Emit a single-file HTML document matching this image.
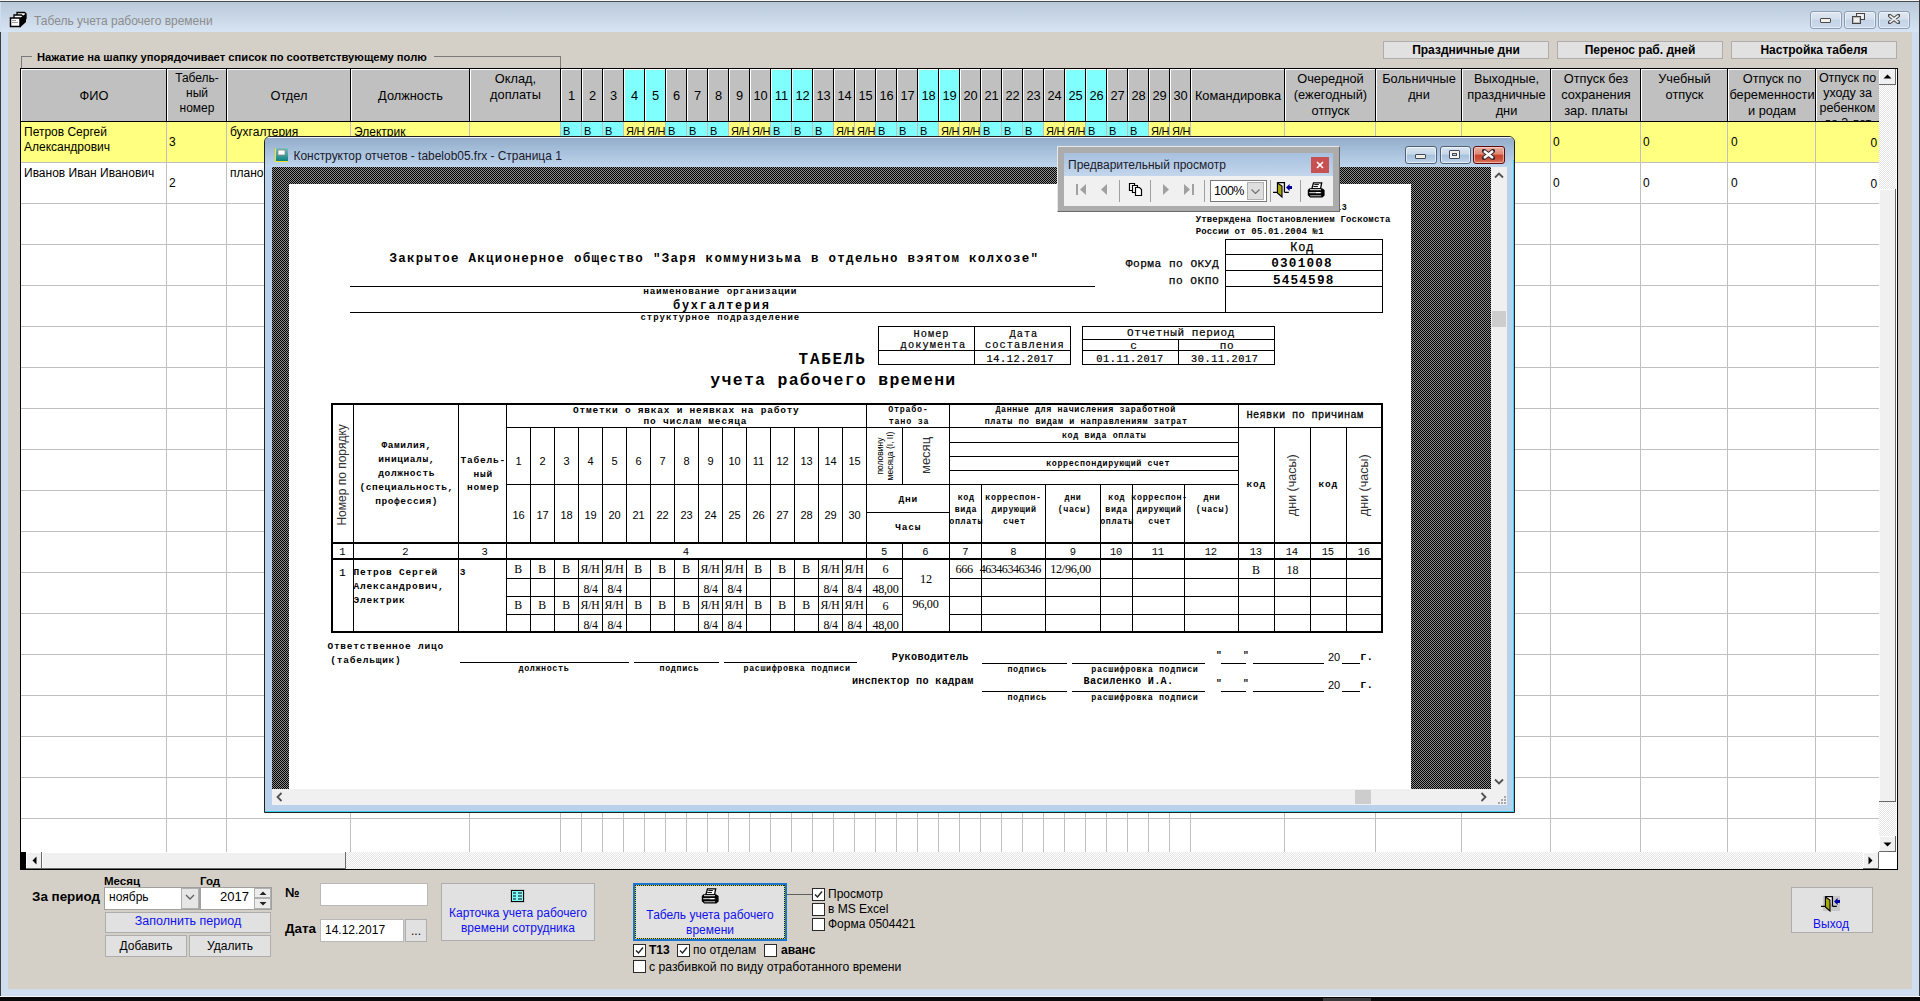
<!DOCTYPE html><html><head><meta charset="utf-8"><style>
html,body{margin:0;padding:0}
body{width:1920px;height:1001px;position:relative;overflow:hidden;background:#d4d0c8;font-family:"Liberation Sans",sans-serif;font-size:12px;color:#000}
div{position:absolute;box-sizing:border-box}
.t{white-space:pre;line-height:14px}
.m{font-family:"Liberation Mono",monospace}
.b{font-weight:bold}
.hatch{background-color:#8a8a8a;background-image:linear-gradient(45deg,#000 25%,transparent 25%,transparent 75%,#000 75%),linear-gradient(45deg,#000 25%,transparent 25%,transparent 75%,#000 75%);background-size:2px 2px;background-position:0 0,1px 1px}
.chk{background:#fff;border:1px solid #333}
.lchk{background-color:#fff;background-image:linear-gradient(45deg,#e4e4e4 25%,transparent 25%,transparent 75%,#e4e4e4 75%),linear-gradient(45deg,#e4e4e4 25%,transparent 25%,transparent 75%,#e4e4e4 75%);background-size:2px 2px;background-position:0 0,1px 1px}
</style></head><body>
<div style="left:0px;top:0px;width:1920px;height:1001px;background:#cfdeee"></div>
<div style="left:1px;top:2px;width:1918px;height:30px;background:linear-gradient(#bac9d9,#d6e4f3)"></div>
<div style="left:8px;top:32px;width:1904px;height:957px;background:#d4d0c8"></div>
<div style="left:0px;top:0px;width:1920px;height:1px;background:#f4f4f4"></div>
<div style="left:0px;top:1px;width:1920px;height:1px;background:#474b52"></div>
<div style="left:0px;top:32px;width:1px;height:969px;background:#3c3c3c"></div>
<div style="left:1919px;top:0px;width:1px;height:1001px;background:#3c3c3c"></div>
<div style="left:0px;top:997px;width:1920px;height:4px;background:#080808"></div>
<div style="left:0px;top:996px;width:1920px;height:1px;background:#f4f8fc"></div>
<div style="left:1323px;top:998px;width:48px;height:3px;background:#383838"></div>
<svg style="position:absolute;left:9px;top:11px" width="18" height="17" viewBox="0 0 18 17">
<path d="M8 1.5h7.5l1.5 1.2v5l-2 1.5H8z" fill="#fff" stroke="#000" stroke-width="1.3"/>
<path d="M5 4h7.5l1.5 1.2v5l-2 1.5H5z" fill="#fff" stroke="#000" stroke-width="1.3"/>
<path d="M1.5 7h9.5v8.5H1.5z" fill="#fff" stroke="#000" stroke-width="1.5"/>
<path d="M11 7l6-4.5v8.5l-6 5.5z" fill="#000"/>
<path d="M3 9.5h4M3 11.5h6" stroke="#999" stroke-width="1"/>
</svg>
<div class="t" style="left:34px;top:14px;color:#8c8c8c;font-size:12px">Табель учета рабочего времени</div>
<div style="left:1810px;top:11px;width:32px;height:18px;background:linear-gradient(#dfe8f2,#d3dfec 45%,#c4d4e6 50%,#cbdaea);border:1px solid #8c9db3;box-shadow:inset 0 0 0 1px rgba(255,255,255,0.5);border-radius:3px"></div>
<div style="left:1844px;top:11px;width:32px;height:18px;background:linear-gradient(#dfe8f2,#d3dfec 45%,#c4d4e6 50%,#cbdaea);border:1px solid #8c9db3;box-shadow:inset 0 0 0 1px rgba(255,255,255,0.5);border-radius:3px"></div>
<div style="left:1878px;top:11px;width:32px;height:18px;background:linear-gradient(#dfe8f2,#d3dfec 45%,#c4d4e6 50%,#cbdaea);border:1px solid #8c9db3;box-shadow:inset 0 0 0 1px rgba(255,255,255,0.5);border-radius:3px"></div>
<div style="left:1820px;top:18px;width:11px;height:5px;background:#f4f2ec;border:1px solid #4a4a4a;border-radius:1px"></div>
<div style="left:1856px;top:13px;width:9px;height:7px;border:1px solid #444;background:#f0f0f0;box-shadow:inset 0 0 0 1px #e8e8e8"></div>
<div style="left:1852px;top:16px;width:9px;height:8px;border:1px solid #444;background:#f0f0f0;box-shadow:inset 0 0 0 1px #bbb"></div>
<svg style="position:absolute;left:1888px;top:14px" width="12" height="10"><path d="M1.5 1.5l9 7M10.5 1.5l-9 7" stroke="#4a4a4a" stroke-width="3.6" stroke-linecap="round"/><path d="M1.5 1.5l9 7M10.5 1.5l-9 7" stroke="#f0f0f0" stroke-width="1.6"/></svg>
<div style="left:21px;top:56px;width:11px;height:1px;background:#7a7a7a"></div>
<div style="left:434px;top:56px;width:127px;height:1px;background:#7a7a7a"></div>
<div style="left:21px;top:56px;width:1px;height:13px;background:#7a7a7a"></div>
<div style="left:560px;top:56px;width:1px;height:13px;background:#7a7a7a"></div>
<div class="t" style="left:37px;top:50px;font-weight:bold;font-size:11.2px">Нажатие на шапку упорядочивает список по соответствующему полю</div>
<div style="left:1383px;top:41px;width:166px;height:18px;background:#e1e1e1;border:1px solid #adadad"></div>
<div class="t" style="left:1166.0px;top:43.0px;width:600px;text-align:center;line-height:14px;font-weight:bold">Праздничные дни</div>
<div style="left:1557px;top:41px;width:166px;height:18px;background:#e1e1e1;border:1px solid #adadad"></div>
<div class="t" style="left:1340.0px;top:43.0px;width:600px;text-align:center;line-height:14px;font-weight:bold">Перенос раб. дней</div>
<div style="left:1731px;top:41px;width:166px;height:18px;background:#e1e1e1;border:1px solid #adadad"></div>
<div class="t" style="left:1514.0px;top:43.0px;width:600px;text-align:center;line-height:14px;font-weight:bold">Настройка табеля</div>
<div style="left:20px;top:68px;width:1878px;height:802px;background:#fff;border:1px solid #000"></div>
<div style="left:21px;top:69px;width:1858px;height:52px;background:#c0c0c0"></div>
<div style="left:624px;top:70px;width:20px;height:51px;background:#80ffff"></div>
<div style="left:645px;top:70px;width:20px;height:51px;background:#80ffff"></div>
<div style="left:771px;top:70px;width:20px;height:51px;background:#80ffff"></div>
<div style="left:792px;top:70px;width:20px;height:51px;background:#80ffff"></div>
<div style="left:918px;top:70px;width:20px;height:51px;background:#80ffff"></div>
<div style="left:939px;top:70px;width:20px;height:51px;background:#80ffff"></div>
<div style="left:1065px;top:70px;width:20px;height:51px;background:#80ffff"></div>
<div style="left:1086px;top:70px;width:20px;height:51px;background:#80ffff"></div>
<div style="left:21px;top:69px;width:1858px;height:1px;background:#fff"></div>
<div style="left:166px;top:69px;width:1px;height:52px;background:#000"></div>
<div style="left:167px;top:69px;width:1px;height:52px;background:#fff"></div>
<div style="left:226px;top:69px;width:1px;height:52px;background:#000"></div>
<div style="left:227px;top:69px;width:1px;height:52px;background:#fff"></div>
<div style="left:350px;top:69px;width:1px;height:52px;background:#000"></div>
<div style="left:351px;top:69px;width:1px;height:52px;background:#fff"></div>
<div style="left:469px;top:69px;width:1px;height:52px;background:#000"></div>
<div style="left:470px;top:69px;width:1px;height:52px;background:#fff"></div>
<div style="left:560px;top:69px;width:1px;height:52px;background:#000"></div>
<div style="left:561px;top:69px;width:1px;height:52px;background:#fff"></div>
<div style="left:581px;top:69px;width:1px;height:52px;background:#000"></div>
<div style="left:582px;top:69px;width:1px;height:52px;background:#fff"></div>
<div style="left:602px;top:69px;width:1px;height:52px;background:#000"></div>
<div style="left:603px;top:69px;width:1px;height:52px;background:#fff"></div>
<div style="left:623px;top:69px;width:1px;height:52px;background:#000"></div>
<div style="left:624px;top:69px;width:1px;height:52px;background:#fff"></div>
<div style="left:644px;top:69px;width:1px;height:52px;background:#000"></div>
<div style="left:645px;top:69px;width:1px;height:52px;background:#fff"></div>
<div style="left:665px;top:69px;width:1px;height:52px;background:#000"></div>
<div style="left:666px;top:69px;width:1px;height:52px;background:#fff"></div>
<div style="left:686px;top:69px;width:1px;height:52px;background:#000"></div>
<div style="left:687px;top:69px;width:1px;height:52px;background:#fff"></div>
<div style="left:707px;top:69px;width:1px;height:52px;background:#000"></div>
<div style="left:708px;top:69px;width:1px;height:52px;background:#fff"></div>
<div style="left:728px;top:69px;width:1px;height:52px;background:#000"></div>
<div style="left:729px;top:69px;width:1px;height:52px;background:#fff"></div>
<div style="left:749px;top:69px;width:1px;height:52px;background:#000"></div>
<div style="left:750px;top:69px;width:1px;height:52px;background:#fff"></div>
<div style="left:770px;top:69px;width:1px;height:52px;background:#000"></div>
<div style="left:771px;top:69px;width:1px;height:52px;background:#fff"></div>
<div style="left:791px;top:69px;width:1px;height:52px;background:#000"></div>
<div style="left:792px;top:69px;width:1px;height:52px;background:#fff"></div>
<div style="left:812px;top:69px;width:1px;height:52px;background:#000"></div>
<div style="left:813px;top:69px;width:1px;height:52px;background:#fff"></div>
<div style="left:833px;top:69px;width:1px;height:52px;background:#000"></div>
<div style="left:834px;top:69px;width:1px;height:52px;background:#fff"></div>
<div style="left:854px;top:69px;width:1px;height:52px;background:#000"></div>
<div style="left:855px;top:69px;width:1px;height:52px;background:#fff"></div>
<div style="left:875px;top:69px;width:1px;height:52px;background:#000"></div>
<div style="left:876px;top:69px;width:1px;height:52px;background:#fff"></div>
<div style="left:896px;top:69px;width:1px;height:52px;background:#000"></div>
<div style="left:897px;top:69px;width:1px;height:52px;background:#fff"></div>
<div style="left:917px;top:69px;width:1px;height:52px;background:#000"></div>
<div style="left:918px;top:69px;width:1px;height:52px;background:#fff"></div>
<div style="left:938px;top:69px;width:1px;height:52px;background:#000"></div>
<div style="left:939px;top:69px;width:1px;height:52px;background:#fff"></div>
<div style="left:959px;top:69px;width:1px;height:52px;background:#000"></div>
<div style="left:960px;top:69px;width:1px;height:52px;background:#fff"></div>
<div style="left:980px;top:69px;width:1px;height:52px;background:#000"></div>
<div style="left:981px;top:69px;width:1px;height:52px;background:#fff"></div>
<div style="left:1001px;top:69px;width:1px;height:52px;background:#000"></div>
<div style="left:1002px;top:69px;width:1px;height:52px;background:#fff"></div>
<div style="left:1022px;top:69px;width:1px;height:52px;background:#000"></div>
<div style="left:1023px;top:69px;width:1px;height:52px;background:#fff"></div>
<div style="left:1043px;top:69px;width:1px;height:52px;background:#000"></div>
<div style="left:1044px;top:69px;width:1px;height:52px;background:#fff"></div>
<div style="left:1064px;top:69px;width:1px;height:52px;background:#000"></div>
<div style="left:1065px;top:69px;width:1px;height:52px;background:#fff"></div>
<div style="left:1085px;top:69px;width:1px;height:52px;background:#000"></div>
<div style="left:1086px;top:69px;width:1px;height:52px;background:#fff"></div>
<div style="left:1106px;top:69px;width:1px;height:52px;background:#000"></div>
<div style="left:1107px;top:69px;width:1px;height:52px;background:#fff"></div>
<div style="left:1127px;top:69px;width:1px;height:52px;background:#000"></div>
<div style="left:1128px;top:69px;width:1px;height:52px;background:#fff"></div>
<div style="left:1148px;top:69px;width:1px;height:52px;background:#000"></div>
<div style="left:1149px;top:69px;width:1px;height:52px;background:#fff"></div>
<div style="left:1169px;top:69px;width:1px;height:52px;background:#000"></div>
<div style="left:1170px;top:69px;width:1px;height:52px;background:#fff"></div>
<div style="left:1190px;top:69px;width:1px;height:52px;background:#000"></div>
<div style="left:1191px;top:69px;width:1px;height:52px;background:#fff"></div>
<div style="left:1284px;top:69px;width:1px;height:52px;background:#000"></div>
<div style="left:1285px;top:69px;width:1px;height:52px;background:#fff"></div>
<div style="left:1375px;top:69px;width:1px;height:52px;background:#000"></div>
<div style="left:1376px;top:69px;width:1px;height:52px;background:#fff"></div>
<div style="left:1461px;top:69px;width:1px;height:52px;background:#000"></div>
<div style="left:1462px;top:69px;width:1px;height:52px;background:#fff"></div>
<div style="left:1550px;top:69px;width:1px;height:52px;background:#000"></div>
<div style="left:1551px;top:69px;width:1px;height:52px;background:#fff"></div>
<div style="left:1640px;top:69px;width:1px;height:52px;background:#000"></div>
<div style="left:1641px;top:69px;width:1px;height:52px;background:#fff"></div>
<div style="left:1727px;top:69px;width:1px;height:52px;background:#000"></div>
<div style="left:1728px;top:69px;width:1px;height:52px;background:#fff"></div>
<div style="left:1815px;top:69px;width:1px;height:52px;background:#000"></div>
<div style="left:1816px;top:69px;width:1px;height:52px;background:#fff"></div>
<div style="left:1879px;top:69px;width:1px;height:52px;background:#000"></div>
<div style="left:21px;top:69px;width:1px;height:52px;background:#fff"></div>
<div style="left:21px;top:121px;width:1858px;height:1px;background:#000"></div>
<div class="t" style="left:21px;top:87.5px;width:146px;text-align:center;line-height:16px;font-size:12.8px;">ФИО</div>
<div class="t" style="left:167px;top:71.1px;width:60px;text-align:center;line-height:15px;font-size:12.8px;font-size:12px">Табель-</div>
<div class="t" style="left:167px;top:86.1px;width:60px;text-align:center;line-height:15px;font-size:12.8px;font-size:12px">ный</div>
<div class="t" style="left:167px;top:101.1px;width:60px;text-align:center;line-height:15px;font-size:12.8px;font-size:12px">номер</div>
<div class="t" style="left:227px;top:87.5px;width:124px;text-align:center;line-height:16px;font-size:12.8px;">Отдел</div>
<div class="t" style="left:351px;top:87.5px;width:119px;text-align:center;line-height:16px;font-size:12.8px;">Должность</div>
<div class="t" style="left:470px;top:70.6px;width:91px;text-align:center;line-height:16px;font-size:12.8px;">Оклад,</div>
<div class="t" style="left:470px;top:86.6px;width:91px;text-align:center;line-height:16px;font-size:12.8px;">доплаты</div>
<div class="t" style="left:561px;top:87.5px;width:21px;text-align:center;line-height:16px;font-size:12.8px;">1</div>
<div class="t" style="left:582px;top:87.5px;width:21px;text-align:center;line-height:16px;font-size:12.8px;">2</div>
<div class="t" style="left:603px;top:87.5px;width:21px;text-align:center;line-height:16px;font-size:12.8px;">3</div>
<div class="t" style="left:624px;top:87.5px;width:21px;text-align:center;line-height:16px;font-size:12.8px;">4</div>
<div class="t" style="left:645px;top:87.5px;width:21px;text-align:center;line-height:16px;font-size:12.8px;">5</div>
<div class="t" style="left:666px;top:87.5px;width:21px;text-align:center;line-height:16px;font-size:12.8px;">6</div>
<div class="t" style="left:687px;top:87.5px;width:21px;text-align:center;line-height:16px;font-size:12.8px;">7</div>
<div class="t" style="left:708px;top:87.5px;width:21px;text-align:center;line-height:16px;font-size:12.8px;">8</div>
<div class="t" style="left:729px;top:87.5px;width:21px;text-align:center;line-height:16px;font-size:12.8px;">9</div>
<div class="t" style="left:750px;top:87.5px;width:21px;text-align:center;line-height:16px;font-size:12.8px;">10</div>
<div class="t" style="left:771px;top:87.5px;width:21px;text-align:center;line-height:16px;font-size:12.8px;">11</div>
<div class="t" style="left:792px;top:87.5px;width:21px;text-align:center;line-height:16px;font-size:12.8px;">12</div>
<div class="t" style="left:813px;top:87.5px;width:21px;text-align:center;line-height:16px;font-size:12.8px;">13</div>
<div class="t" style="left:834px;top:87.5px;width:21px;text-align:center;line-height:16px;font-size:12.8px;">14</div>
<div class="t" style="left:855px;top:87.5px;width:21px;text-align:center;line-height:16px;font-size:12.8px;">15</div>
<div class="t" style="left:876px;top:87.5px;width:21px;text-align:center;line-height:16px;font-size:12.8px;">16</div>
<div class="t" style="left:897px;top:87.5px;width:21px;text-align:center;line-height:16px;font-size:12.8px;">17</div>
<div class="t" style="left:918px;top:87.5px;width:21px;text-align:center;line-height:16px;font-size:12.8px;">18</div>
<div class="t" style="left:939px;top:87.5px;width:21px;text-align:center;line-height:16px;font-size:12.8px;">19</div>
<div class="t" style="left:960px;top:87.5px;width:21px;text-align:center;line-height:16px;font-size:12.8px;">20</div>
<div class="t" style="left:981px;top:87.5px;width:21px;text-align:center;line-height:16px;font-size:12.8px;">21</div>
<div class="t" style="left:1002px;top:87.5px;width:21px;text-align:center;line-height:16px;font-size:12.8px;">22</div>
<div class="t" style="left:1023px;top:87.5px;width:21px;text-align:center;line-height:16px;font-size:12.8px;">23</div>
<div class="t" style="left:1044px;top:87.5px;width:21px;text-align:center;line-height:16px;font-size:12.8px;">24</div>
<div class="t" style="left:1065px;top:87.5px;width:21px;text-align:center;line-height:16px;font-size:12.8px;">25</div>
<div class="t" style="left:1086px;top:87.5px;width:21px;text-align:center;line-height:16px;font-size:12.8px;">26</div>
<div class="t" style="left:1107px;top:87.5px;width:21px;text-align:center;line-height:16px;font-size:12.8px;">27</div>
<div class="t" style="left:1128px;top:87.5px;width:21px;text-align:center;line-height:16px;font-size:12.8px;">28</div>
<div class="t" style="left:1149px;top:87.5px;width:21px;text-align:center;line-height:16px;font-size:12.8px;">29</div>
<div class="t" style="left:1170px;top:87.5px;width:21px;text-align:center;line-height:16px;font-size:12.8px;">30</div>
<div class="t" style="left:1191px;top:87.5px;width:94px;text-align:center;line-height:16px;font-size:12.8px;">Командировка</div>
<div class="t" style="left:1285px;top:70.6px;width:91px;text-align:center;line-height:16px;font-size:12.8px;">Очередной</div>
<div class="t" style="left:1285px;top:86.6px;width:91px;text-align:center;line-height:16px;font-size:12.8px;">(ежегодный)</div>
<div class="t" style="left:1285px;top:102.6px;width:91px;text-align:center;line-height:16px;font-size:12.8px;">отпуск</div>
<div class="t" style="left:1376px;top:70.6px;width:86px;text-align:center;line-height:16px;font-size:12.8px;">Больничные</div>
<div class="t" style="left:1376px;top:86.6px;width:86px;text-align:center;line-height:16px;font-size:12.8px;">дни</div>
<div class="t" style="left:1462px;top:70.6px;width:89px;text-align:center;line-height:16px;font-size:12.8px;">Выходные,</div>
<div class="t" style="left:1462px;top:86.6px;width:89px;text-align:center;line-height:16px;font-size:12.8px;">праздничные</div>
<div class="t" style="left:1462px;top:102.6px;width:89px;text-align:center;line-height:16px;font-size:12.8px;">дни</div>
<div class="t" style="left:1551px;top:70.6px;width:90px;text-align:center;line-height:16px;font-size:12.8px;">Отпуск без</div>
<div class="t" style="left:1551px;top:86.6px;width:90px;text-align:center;line-height:16px;font-size:12.8px;">сохранения</div>
<div class="t" style="left:1551px;top:102.6px;width:90px;text-align:center;line-height:16px;font-size:12.8px;">зар. платы</div>
<div class="t" style="left:1641px;top:70.6px;width:87px;text-align:center;line-height:16px;font-size:12.8px;">Учебный</div>
<div class="t" style="left:1641px;top:86.6px;width:87px;text-align:center;line-height:16px;font-size:12.8px;">отпуск</div>
<div class="t" style="left:1728px;top:70.6px;width:88px;text-align:center;line-height:16px;font-size:12.8px;">Отпуск по</div>
<div class="t" style="left:1728px;top:86.6px;width:88px;text-align:center;line-height:16px;font-size:12.8px;">беременности</div>
<div class="t" style="left:1728px;top:102.6px;width:88px;text-align:center;line-height:16px;font-size:12.8px;">и родам</div>
<div style="left:1816px;top:70px;width:63px;height:51px;overflow:hidden"><div class="t" style="left:0;top:1px;width:63px;text-align:center;line-height:15px;font-size:12.5px">Отпуск по
уходу за
ребенком
до 3 лет</div></div>
<div style="left:21px;top:122px;width:1858px;height:40px;background:#ffff80"></div>
<div style="left:561px;top:122px;width:20px;height:40px;background:#80ffff"></div>
<div style="left:582px;top:122px;width:20px;height:40px;background:#80ffff"></div>
<div style="left:603px;top:122px;width:20px;height:40px;background:#80ffff"></div>
<div style="left:666px;top:122px;width:20px;height:40px;background:#80ffff"></div>
<div style="left:687px;top:122px;width:20px;height:40px;background:#80ffff"></div>
<div style="left:708px;top:122px;width:20px;height:40px;background:#80ffff"></div>
<div style="left:771px;top:122px;width:20px;height:40px;background:#80ffff"></div>
<div style="left:792px;top:122px;width:20px;height:40px;background:#80ffff"></div>
<div style="left:813px;top:122px;width:20px;height:40px;background:#80ffff"></div>
<div style="left:876px;top:122px;width:20px;height:40px;background:#80ffff"></div>
<div style="left:897px;top:122px;width:20px;height:40px;background:#80ffff"></div>
<div style="left:918px;top:122px;width:20px;height:40px;background:#80ffff"></div>
<div style="left:981px;top:122px;width:20px;height:40px;background:#80ffff"></div>
<div style="left:1002px;top:122px;width:20px;height:40px;background:#80ffff"></div>
<div style="left:1023px;top:122px;width:20px;height:40px;background:#80ffff"></div>
<div style="left:1086px;top:122px;width:20px;height:40px;background:#80ffff"></div>
<div style="left:1107px;top:122px;width:20px;height:40px;background:#80ffff"></div>
<div style="left:1128px;top:122px;width:20px;height:40px;background:#80ffff"></div>
<div style="left:21px;top:162px;width:1858px;height:1px;background:#c0c0c0"></div>
<div style="left:21px;top:203px;width:1858px;height:1px;background:#c0c0c0"></div>
<div style="left:21px;top:244px;width:1858px;height:1px;background:#c0c0c0"></div>
<div style="left:21px;top:285px;width:1858px;height:1px;background:#c0c0c0"></div>
<div style="left:21px;top:326px;width:1858px;height:1px;background:#c0c0c0"></div>
<div style="left:21px;top:367px;width:1858px;height:1px;background:#c0c0c0"></div>
<div style="left:21px;top:408px;width:1858px;height:1px;background:#c0c0c0"></div>
<div style="left:21px;top:449px;width:1858px;height:1px;background:#c0c0c0"></div>
<div style="left:21px;top:490px;width:1858px;height:1px;background:#c0c0c0"></div>
<div style="left:21px;top:531px;width:1858px;height:1px;background:#c0c0c0"></div>
<div style="left:21px;top:572px;width:1858px;height:1px;background:#c0c0c0"></div>
<div style="left:21px;top:613px;width:1858px;height:1px;background:#c0c0c0"></div>
<div style="left:21px;top:654px;width:1858px;height:1px;background:#c0c0c0"></div>
<div style="left:21px;top:695px;width:1858px;height:1px;background:#c0c0c0"></div>
<div style="left:21px;top:736px;width:1858px;height:1px;background:#c0c0c0"></div>
<div style="left:21px;top:777px;width:1858px;height:1px;background:#c0c0c0"></div>
<div style="left:21px;top:818px;width:1858px;height:1px;background:#c0c0c0"></div>
<div style="left:166px;top:122px;width:1px;height:730px;background:#c0c0c0"></div>
<div style="left:226px;top:122px;width:1px;height:730px;background:#c0c0c0"></div>
<div style="left:350px;top:122px;width:1px;height:730px;background:#c0c0c0"></div>
<div style="left:469px;top:122px;width:1px;height:730px;background:#c0c0c0"></div>
<div style="left:560px;top:122px;width:1px;height:730px;background:#c0c0c0"></div>
<div style="left:581px;top:122px;width:1px;height:730px;background:#c0c0c0"></div>
<div style="left:602px;top:122px;width:1px;height:730px;background:#c0c0c0"></div>
<div style="left:623px;top:122px;width:1px;height:730px;background:#c0c0c0"></div>
<div style="left:644px;top:122px;width:1px;height:730px;background:#c0c0c0"></div>
<div style="left:665px;top:122px;width:1px;height:730px;background:#c0c0c0"></div>
<div style="left:686px;top:122px;width:1px;height:730px;background:#c0c0c0"></div>
<div style="left:707px;top:122px;width:1px;height:730px;background:#c0c0c0"></div>
<div style="left:728px;top:122px;width:1px;height:730px;background:#c0c0c0"></div>
<div style="left:749px;top:122px;width:1px;height:730px;background:#c0c0c0"></div>
<div style="left:770px;top:122px;width:1px;height:730px;background:#c0c0c0"></div>
<div style="left:791px;top:122px;width:1px;height:730px;background:#c0c0c0"></div>
<div style="left:812px;top:122px;width:1px;height:730px;background:#c0c0c0"></div>
<div style="left:833px;top:122px;width:1px;height:730px;background:#c0c0c0"></div>
<div style="left:854px;top:122px;width:1px;height:730px;background:#c0c0c0"></div>
<div style="left:875px;top:122px;width:1px;height:730px;background:#c0c0c0"></div>
<div style="left:896px;top:122px;width:1px;height:730px;background:#c0c0c0"></div>
<div style="left:917px;top:122px;width:1px;height:730px;background:#c0c0c0"></div>
<div style="left:938px;top:122px;width:1px;height:730px;background:#c0c0c0"></div>
<div style="left:959px;top:122px;width:1px;height:730px;background:#c0c0c0"></div>
<div style="left:980px;top:122px;width:1px;height:730px;background:#c0c0c0"></div>
<div style="left:1001px;top:122px;width:1px;height:730px;background:#c0c0c0"></div>
<div style="left:1022px;top:122px;width:1px;height:730px;background:#c0c0c0"></div>
<div style="left:1043px;top:122px;width:1px;height:730px;background:#c0c0c0"></div>
<div style="left:1064px;top:122px;width:1px;height:730px;background:#c0c0c0"></div>
<div style="left:1085px;top:122px;width:1px;height:730px;background:#c0c0c0"></div>
<div style="left:1106px;top:122px;width:1px;height:730px;background:#c0c0c0"></div>
<div style="left:1127px;top:122px;width:1px;height:730px;background:#c0c0c0"></div>
<div style="left:1148px;top:122px;width:1px;height:730px;background:#c0c0c0"></div>
<div style="left:1169px;top:122px;width:1px;height:730px;background:#c0c0c0"></div>
<div style="left:1190px;top:122px;width:1px;height:730px;background:#c0c0c0"></div>
<div style="left:1284px;top:122px;width:1px;height:730px;background:#c0c0c0"></div>
<div style="left:1375px;top:122px;width:1px;height:730px;background:#c0c0c0"></div>
<div style="left:1461px;top:122px;width:1px;height:730px;background:#c0c0c0"></div>
<div style="left:1550px;top:122px;width:1px;height:730px;background:#c0c0c0"></div>
<div style="left:1640px;top:122px;width:1px;height:730px;background:#c0c0c0"></div>
<div style="left:1727px;top:122px;width:1px;height:730px;background:#c0c0c0"></div>
<div style="left:1815px;top:122px;width:1px;height:730px;background:#c0c0c0"></div>
<div class="t" style="left:24px;top:124.5px;line-height:15px">Петров Сергей
Александрович</div>
<div class="t" style="left:169px;top:135px;">3</div>
<div class="t" style="left:230px;top:125px;">бухгалтерия</div>
<div class="t" style="left:354px;top:125px;">Электрик</div>
<div class="t" style="left:563px;top:124px;font-size:11px;letter-spacing:-0.3px">В</div>
<div class="t" style="left:584px;top:124px;font-size:11px;letter-spacing:-0.3px">В</div>
<div class="t" style="left:605px;top:124px;font-size:11px;letter-spacing:-0.3px">В</div>
<div class="t" style="left:626px;top:124px;font-size:11px;letter-spacing:-0.3px">Я/Н</div>
<div class="t" style="left:647px;top:124px;font-size:11px;letter-spacing:-0.3px">Я/Н</div>
<div class="t" style="left:668px;top:124px;font-size:11px;letter-spacing:-0.3px">В</div>
<div class="t" style="left:689px;top:124px;font-size:11px;letter-spacing:-0.3px">В</div>
<div class="t" style="left:710px;top:124px;font-size:11px;letter-spacing:-0.3px">В</div>
<div class="t" style="left:731px;top:124px;font-size:11px;letter-spacing:-0.3px">Я/Н</div>
<div class="t" style="left:752px;top:124px;font-size:11px;letter-spacing:-0.3px">Я/Н</div>
<div class="t" style="left:773px;top:124px;font-size:11px;letter-spacing:-0.3px">В</div>
<div class="t" style="left:794px;top:124px;font-size:11px;letter-spacing:-0.3px">В</div>
<div class="t" style="left:815px;top:124px;font-size:11px;letter-spacing:-0.3px">В</div>
<div class="t" style="left:836px;top:124px;font-size:11px;letter-spacing:-0.3px">Я/Н</div>
<div class="t" style="left:857px;top:124px;font-size:11px;letter-spacing:-0.3px">Я/Н</div>
<div class="t" style="left:878px;top:124px;font-size:11px;letter-spacing:-0.3px">В</div>
<div class="t" style="left:899px;top:124px;font-size:11px;letter-spacing:-0.3px">В</div>
<div class="t" style="left:920px;top:124px;font-size:11px;letter-spacing:-0.3px">В</div>
<div class="t" style="left:941px;top:124px;font-size:11px;letter-spacing:-0.3px">Я/Н</div>
<div class="t" style="left:962px;top:124px;font-size:11px;letter-spacing:-0.3px">Я/Н</div>
<div class="t" style="left:983px;top:124px;font-size:11px;letter-spacing:-0.3px">В</div>
<div class="t" style="left:1004px;top:124px;font-size:11px;letter-spacing:-0.3px">В</div>
<div class="t" style="left:1025px;top:124px;font-size:11px;letter-spacing:-0.3px">В</div>
<div class="t" style="left:1046px;top:124px;font-size:11px;letter-spacing:-0.3px">Я/Н</div>
<div class="t" style="left:1067px;top:124px;font-size:11px;letter-spacing:-0.3px">Я/Н</div>
<div class="t" style="left:1088px;top:124px;font-size:11px;letter-spacing:-0.3px">В</div>
<div class="t" style="left:1109px;top:124px;font-size:11px;letter-spacing:-0.3px">В</div>
<div class="t" style="left:1130px;top:124px;font-size:11px;letter-spacing:-0.3px">В</div>
<div class="t" style="left:1151px;top:124px;font-size:11px;letter-spacing:-0.3px">Я/Н</div>
<div class="t" style="left:1172px;top:124px;font-size:11px;letter-spacing:-0.3px">Я/Н</div>
<div class="t" style="left:24px;top:166px;">Иванов Иван Иванович</div>
<div class="t" style="left:169px;top:176px;">2</div>
<div class="t" style="left:230px;top:166px;">планово-экономический</div>
<div class="t" style="left:1553px;top:135px;">0</div>
<div class="t" style="left:1643px;top:135px;">0</div>
<div class="t" style="left:1731px;top:135px;">0</div>
<div class="t" style="left:1553px;top:176px;">0</div>
<div class="t" style="left:1643px;top:176px;">0</div>
<div class="t" style="left:1731px;top:176px;">0</div>
<div class="t" style="left:1870.5px;top:135.5px;">0</div>
<div class="t" style="left:1870.5px;top:176.5px;">0</div>
<div class="lchk" style="left:1879px;top:69px;width:17px;height:783px;"></div>
<div style="left:1879px;top:69px;width:17px;height:16px;background:#f0f0f0;border-right:1px solid #696969;border-bottom:1px solid #696969;box-shadow:inset 1px 1px #fff"></div>
<svg style="position:absolute;left:1883px;top:73px" width="9" height="6"><path d="M0.5 5.5L4.5 1.5L8.5 5.5z" fill="#000"/></svg>
<div style="left:1879px;top:189px;width:17px;height:613px;background:#f0f0f0;border-right:1px solid #696969;border-bottom:1px solid #696969;box-shadow:inset 1px 1px #fff"></div>
<div style="left:1879px;top:836px;width:17px;height:16px;background:#f0f0f0;border-right:1px solid #696969;border-bottom:1px solid #696969;box-shadow:inset 1px 1px #fff"></div>
<svg style="position:absolute;left:1883px;top:842px" width="9" height="6"><path d="M0.5 0.5L4.5 4.5L8.5 0.5z" fill="#000"/></svg>
<div class="lchk" style="left:20px;top:852px;width:1859px;height:17px;"></div>
<div style="left:20px;top:852px;width:6px;height:17px;background:#000"></div>
<div style="left:26px;top:852px;width:16px;height:17px;background:#f0f0f0;border-right:1px solid #696969;border-bottom:1px solid #696969;box-shadow:inset 1px 1px #fff"></div>
<svg style="position:absolute;left:31px;top:856px" width="6" height="9"><path d="M5.5 0.5L1.5 4.5L5.5 8.5z" fill="#000"/></svg>
<div style="left:42px;top:852px;width:304px;height:17px;background:#f0f0f0;border-right:1px solid #696969;border-bottom:1px solid #696969;box-shadow:inset 1px 1px #fff"></div>
<div style="left:1863px;top:852px;width:16px;height:17px;background:#f0f0f0;border-right:1px solid #696969;border-bottom:1px solid #696969;box-shadow:inset 1px 1px #fff"></div>
<svg style="position:absolute;left:1868px;top:856px" width="6" height="9"><path d="M0.5 0.5L4.5 4.5L0.5 8.5z" fill="#000"/></svg>
<div style="left:1879px;top:852px;width:17px;height:17px;background:#fff"></div>
<div style="left:20px;top:869px;width:1878px;height:1px;background:#000"></div>
<div class="t" style="left:32px;top:890px;font-weight:bold;font-size:13.4px">За период</div>
<div class="t" style="left:104px;top:874px;font-weight:bold;font-size:11.5px">Месяц</div>
<div class="t" style="left:200px;top:874px;font-weight:bold;font-size:11.5px">Год</div>
<div style="left:104px;top:887px;width:96px;height:23px;background:#fff;border:1px solid #a0a0a0"></div>
<div class="t" style="left:109px;top:890px;font-size:12px">ноябрь</div>
<div style="left:181px;top:888px;width:18px;height:21px;background:#e6e6e6;border:1px solid #b0b0b0"></div>
<svg style="position:absolute;left:185px;top:894px" width="10" height="7"><path d="M1 1l4 4 4-4" stroke="#606060" stroke-width="1.3" fill="none"/></svg>
<div style="left:200px;top:887px;width:72px;height:23px;background:#fff;border:1px solid #a0a0a0"></div>
<div class="t" style="left:220px;top:889.5px;font-size:13px">2017</div>
<div style="left:254px;top:888px;width:17px;height:10px;background:#ececec;border:1px solid #b0b0b0"></div>
<div style="left:254px;top:898px;width:17px;height:11px;background:#ececec;border:1px solid #b0b0b0"></div>
<svg style="position:absolute;left:259px;top:890px" width="8" height="18"><path d="M0.5 5L4 1.5L7.5 5z" fill="#222"/><path d="M0.5 12L4 15.5L7.5 12z" fill="#222"/></svg>
<div style="left:105px;top:912px;width:166px;height:21px;background:#e1e1e1;border:1px solid #adadad"></div>
<div class="t" style="left:-112.0px;top:915.5px;width:600px;text-align:center;line-height:14px;color:#1010ee;font-size:12.5px;margin-top:-1.5px">Заполнить период</div>
<div style="left:105px;top:935px;width:82px;height:22px;background:#e1e1e1;border:1px solid #adadad"></div>
<div class="t" style="left:-154.0px;top:939.0px;width:600px;text-align:center;line-height:14px;">Добавить</div>
<div style="left:189px;top:935px;width:82px;height:22px;background:#e1e1e1;border:1px solid #adadad"></div>
<div class="t" style="left:-70.0px;top:939.0px;width:600px;text-align:center;line-height:14px;">Удалить</div>
<div class="t" style="left:285px;top:886px;font-weight:bold;font-size:13px">№</div>
<div style="left:320px;top:883px;width:108px;height:23px;background:#fff;border:1px solid #b8b8b8"></div>
<div class="t" style="left:285px;top:922px;font-weight:bold;font-size:13.4px">Дата</div>
<div style="left:320px;top:919px;width:84px;height:23px;background:#fff;border:1px solid #b8b8b8"></div>
<div class="t" style="left:325px;top:923px;font-size:12px">14.12.2017</div>
<div style="left:405px;top:919px;width:22px;height:23px;background:#e1e1e1;border:1px solid #adadad"></div>
<div class="t" style="left:116.0px;top:923.5px;width:600px;text-align:center;line-height:14px;">...</div>
<div style="left:441px;top:883px;width:154px;height:58px;background:#e1e1e1;border:1px solid #adadad"></div>
<div style="left:510px;top:889px;width:15px;height:14px;background:#c8c8c8"></div>
<svg style="position:absolute;left:511px;top:890px" width="13" height="12"><rect x="0.5" y="0.5" width="12" height="11" fill="#80ffff" stroke="#000"/><path d="M2 3h3M7 3h4M2 6h3M7 6h4M2 9h3M7 9h4" stroke="#000" stroke-width="1.2"/></svg>
<div class="t" style="left:218px;top:906.0px;width:600px;text-align:center;line-height:14px;color:#1010ee">Карточка учета рабочего</div>
<div class="t" style="left:218px;top:921.0px;width:600px;text-align:center;line-height:14px;color:#1010ee">времени сотрудника</div>
<div style="left:633px;top:883px;width:154px;height:58px;background:#e1e1e1;border:2px solid #1a74d2"></div>
<div style="left:635px;top:885px;width:150px;height:1px;background:repeating-linear-gradient(90deg,#1a1a1a 0 1px,#e6e600 1px 2px)"></div>
<div style="left:635px;top:938px;width:150px;height:1px;background:repeating-linear-gradient(90deg,#1a1a1a 0 1px,#e6e600 1px 2px)"></div>
<div style="left:635px;top:885px;width:1px;height:54px;background:repeating-linear-gradient(180deg,#1a1a1a 0 1px,#e6e600 1px 2px)"></div>
<div style="left:784px;top:885px;width:1px;height:54px;background:repeating-linear-gradient(180deg,#1a1a1a 0 1px,#e6e600 1px 2px)"></div>
<svg style="position:absolute;left:701px;top:888px" width="19" height="16" viewBox="0 0 19 16"><path d="M6.5 0.8h8.2l-1.2 6H4.8z" fill="#fff" stroke="#000" stroke-width="1.3"/><path d="M7.3 2.6h4.6M6.3 4.6h4.6" stroke="#000" stroke-width="1"/><path d="M2.5 6.2h12.5l2.6 1.8v5.4l-2.2 2.2H3.2L0.8 13.2V8z" fill="#000"/><path d="M3 7.6h11M2.2 10.6h12M3.2 13.8h11" stroke="#c0c0c0" stroke-width="1.1"/><path d="M9 10.6h4" stroke="#fff" stroke-width="1.1"/></svg>
<div class="t" style="left:410px;top:908.0px;width:600px;text-align:center;line-height:14px;color:#1010ee">Табель учета рабочего</div>
<div class="t" style="left:410px;top:923.0px;width:600px;text-align:center;line-height:14px;color:#1010ee">времени</div>
<div style="left:787px;top:894px;width:25px;height:1px;background:#606060"></div>
<div style="left:812px;top:888px;width:13px;height:13px;background:#fff;border:1px solid #2a2a2a"></div>
<svg style="position:absolute;left:814px;top:890px" width="9" height="9"><path d="M1 4.5l2.5 2.5L8 1.5" stroke="#222" stroke-width="1.4" fill="none"/></svg>
<div class="t" style="left:828px;top:887px;">Просмотр</div>
<div style="left:812px;top:903px;width:13px;height:13px;background:#fff;border:1px solid #2a2a2a"></div>
<div class="t" style="left:828px;top:902px;">в MS Excel</div>
<div style="left:812px;top:918px;width:13px;height:13px;background:#fff;border:1px solid #2a2a2a"></div>
<div class="t" style="left:828px;top:917px;">Форма 0504421</div>
<div style="left:633px;top:944px;width:13px;height:13px;background:#fff;border:1px solid #2a2a2a"></div>
<svg style="position:absolute;left:635px;top:946px" width="9" height="9"><path d="M1 4.5l2.5 2.5L8 1.5" stroke="#222" stroke-width="1.4" fill="none"/></svg>
<div class="t" style="left:649px;top:943px;font-weight:bold">Т13</div>
<div style="left:677px;top:944px;width:13px;height:13px;background:#fff;border:1px solid #2a2a2a"></div>
<svg style="position:absolute;left:679px;top:946px" width="9" height="9"><path d="M1 4.5l2.5 2.5L8 1.5" stroke="#222" stroke-width="1.4" fill="none"/></svg>
<div class="t" style="left:693px;top:943px;">по отделам</div>
<div style="left:764px;top:944px;width:13px;height:13px;background:#fff;border:1px solid #2a2a2a"></div>
<div class="t" style="left:781px;top:943px;font-weight:bold">аванс</div>
<div style="left:633px;top:960px;width:13px;height:13px;background:#fff;border:1px solid #2a2a2a"></div>
<div class="t" style="left:649px;top:959.5px;font-size:12.2px">с разбивкой по виду отработанного времени</div>
<div style="left:1791px;top:887px;width:82px;height:46px;background:#e1e1e1;border:1px solid #adadad"></div>
<div style="left:1823px;top:896px;width:17px;height:15px;background:#c8c8c8"></div>
<svg style="position:absolute;left:1811.6px;top:889.6px" width="30" height="24"><g>
<path d="M13.6 6.6h6.8v9.6" fill="#fff" stroke="#000" stroke-width="1.3"/><path d="M13.6 6.6v9.8H9M20.4 16.4h4.4" stroke="#000" stroke-width="1.2" fill="none"/>
<path d="M13.4 7l4.6 3v11l-4.6-4z" fill="#a8a800" stroke="#000" stroke-width="1.1"/>
<path d="M22 11.5l3.6-3.4v6.8z M25 10h3v3h-3z" fill="#00009c"/></g></svg>
<div class="t" style="left:1531px;top:917.0px;width:600px;text-align:center;line-height:14px;color:#1010ee">Выход</div>
<div style="left:264px;top:136px;width:1251px;height:677px;background:#b9d1ea;border:1px solid #202020;border-radius:6px 6px 0 0"></div>
<div style="left:265px;top:137px;width:1249px;height:30px;background:linear-gradient(#f0f4f8 0px,#f0f4f8 1px,#93adca 1px,#bed5ee);border-radius:5px 5px 0 0"></div>
<div style="left:265px;top:811px;width:1249px;height:1px;background:#3ad0f0"></div>
<svg style="position:absolute;left:275px;top:148px" width="13" height="14"><rect x="0" y="0" width="13" height="14" fill="#e8e820"/><rect x="1" y="0" width="12" height="13" fill="url(#g1)"/><defs><linearGradient id="g1" x1="0" y1="0" x2="0" y2="1"><stop offset="0" stop-color="#7fc0c0"/><stop offset="1" stop-color="#108080"/></linearGradient></defs><rect x="3" y="2" width="7" height="5" fill="#fff" stroke="#888" stroke-width="0.8"/></svg>
<div class="t" style="left:293.5px;top:149px;color:#1a1a2a;font-size:11.95px">Конструктор отчетов - tabelob05.frx - Страница 1</div>
<div style="left:1405px;top:146px;width:32px;height:18px;background:linear-gradient(#d8e4f0,#c7d7e9 45%,#a6c0dc 50%,#b4cbe4 80%,#c4d6ea);border:1px solid #4f6076;box-shadow:inset 0 0 0 1px rgba(255,255,255,0.6);border-radius:3px"></div>
<div style="left:1440px;top:146px;width:31px;height:18px;background:linear-gradient(#d8e4f0,#c7d7e9 45%,#a6c0dc 50%,#b4cbe4 80%,#c4d6ea);border:1px solid #4f6076;box-shadow:inset 0 0 0 1px rgba(255,255,255,0.6);border-radius:3px"></div>
<div style="left:1473px;top:146px;width:32px;height:18px;background:linear-gradient(#eab0a2,#de8672 45%,#c9442b 50%,#cc5038 75%,#de7a62);border:1px solid #5a0c10;box-shadow:inset 0 0 0 1px rgba(255,230,220,0.55);border-radius:3px"></div>
<div style="left:1415px;top:154px;width:11px;height:5px;background:#f0ede5;border:1px solid #3e4a5a;border-radius:1px"></div>
<div style="left:1449px;top:150px;width:11px;height:9px;border:1px solid #3e4a5a;background:#f4f2ec;border-radius:1px"></div>
<div style="left:1452px;top:153px;width:5px;height:3px;border:1px solid #3e4a5a;background:#c8d4e0"></div>
<svg style="position:absolute;left:1482px;top:149px" width="13" height="11"><path d="M2 2l9 7M11 2l-9 7" stroke="#3a2a30" stroke-width="4.4" stroke-linecap="round"/><path d="M2 2l9 7M11 2l-9 7" stroke="#fff" stroke-width="2.4"/></svg>
<div class="hatch" style="left:272px;top:167px;width:1219px;height:622px;"></div>
<div style="left:289px;top:184px;width:1122px;height:605px;background:#fff;overflow:hidden"></div>
<div style="left:1491px;top:167px;width:16px;height:622px;background:#f0f0f0"></div>
<svg style="position:absolute;left:1494px;top:172px" width="10" height="7"><path d="M1 5.5l4-4 4 4" stroke="#505050" stroke-width="1.8" fill="none"/></svg>
<svg style="position:absolute;left:1494px;top:778px" width="10" height="7"><path d="M1 1.5l4 4 4-4" stroke="#505050" stroke-width="1.8" fill="none"/></svg>
<div style="left:1492px;top:311px;width:14px;height:16px;background:#cdcdcd"></div>
<div style="left:272px;top:789px;width:1235px;height:16px;background:#f0f0f0"></div>
<svg style="position:absolute;left:276px;top:792px" width="7" height="10"><path d="M5.5 1l-4 4 4 4" stroke="#505050" stroke-width="1.8" fill="none"/></svg>
<svg style="position:absolute;left:1480px;top:792px" width="7" height="10"><path d="M1.5 1l4 4-4 4" stroke="#505050" stroke-width="1.8" fill="none"/></svg>
<div style="left:1355px;top:790px;width:16px;height:14px;background:#cdcdcd"></div>
<div style="left:1491px;top:789px;width:16px;height:16px;background:#f0f0f0"></div>
<div style="left:1504px;top:796px;width:2px;height:2px;background:#a8a8a8"></div>
<div style="left:1501px;top:799px;width:2px;height:2px;background:#a8a8a8"></div>
<div style="left:1504px;top:799px;width:2px;height:2px;background:#a8a8a8"></div>
<div style="left:1498px;top:802px;width:2px;height:2px;background:#a8a8a8"></div>
<div style="left:1501px;top:802px;width:2px;height:2px;background:#a8a8a8"></div>
<div style="left:1504px;top:802px;width:2px;height:2px;background:#a8a8a8"></div>
<div style="left:1513px;top:160px;width:1px;height:652px;background:#3ad0f0"></div>
<div style="left:289px;top:184px;width:1122px;height:605px;overflow:hidden">
<div style="left:-289px;top:-184px;width:1920px;height:1001px">
<div class="t" style="left:1189.49px;top:197.56px;line-height:20px;font-size:8.4px;letter-spacing:0.610px;font-family:'Liberation Mono',monospace;font-weight:bold;">Унифицированная форма № Т-13</div>
<div class="t" style="left:1195.64px;top:209.80px;line-height:20px;font-size:9.0px;letter-spacing:0.170px;font-family:'Liberation Mono',monospace;font-weight:bold;">Утверждена Постановлением Госкомста</div>
<div class="t" style="left:1195.64px;top:221.50px;line-height:20px;font-size:9.0px;letter-spacing:0.170px;font-family:'Liberation Mono',monospace;font-weight:bold;">России от 05.01.2004 №1</div>
<div class="t" style="left:389.50px;top:249.37px;line-height:20px;font-size:12.5px;letter-spacing:1.280px;font-family:'Liberation Mono',monospace;font-weight:bold;">Закрытое Акционерное общество "Заря коммунизьма в отдельно вэятом колхозе"</div>
<div style="left:350px;top:286px;width:745px;height:1px;background:#000"></div>
<div class="t" style="left:643.22px;top:282.29px;line-height:20px;font-size:9.4px;letter-spacing:0.790px;font-family:'Liberation Mono',monospace;font-weight:bold;">наименование организации</div>
<div class="t" style="left:673.12px;top:296.33px;line-height:20px;font-size:11.9px;letter-spacing:1.720px;font-family:'Liberation Mono',monospace;font-weight:bold;">бухгалтерия</div>
<div style="left:350px;top:312px;width:876px;height:1px;background:#000"></div>
<div class="t" style="left:640.44px;top:308.20px;line-height:20px;font-size:9.0px;letter-spacing:0.990px;font-family:'Liberation Mono',monospace;font-weight:bold;">структурное подразделение</div>
<div style="left:1225px;top:239px;width:158px;height:74px;border:1px solid #000"></div>
<div style="left:1225px;top:254px;width:158px;height:1px;background:#000"></div>
<div style="left:1225px;top:270px;width:158px;height:1px;background:#000"></div>
<div style="left:1225px;top:286px;width:158px;height:1px;background:#000"></div>
<div class="t" style="left:1290.22px;top:238.00px;line-height:20px;font-size:12px;letter-spacing:0.830px;font-family:'Liberation Mono',monospace;-webkit-text-stroke:0.25px #000">Код</div>
<div class="t" style="left:1271.29px;top:254.22px;line-height:20px;font-size:12.7px;letter-spacing:1.170px;font-family:'Liberation Mono',monospace;font-weight:bold;">0301008</div>
<div class="t" style="left:1272.99px;top:271.37px;line-height:20px;font-size:12.7px;letter-spacing:1.170px;font-family:'Liberation Mono',monospace;font-weight:bold;">5454598</div>
<div class="t" style="left:1125.85px;top:253.62px;line-height:20px;font-size:11.2px;letter-spacing:0.460px;font-family:'Liberation Mono',monospace;-webkit-text-stroke:0.25px #000">Форма по ОКУД</div>
<div class="t" style="left:1168.85px;top:270.82px;line-height:20px;font-size:11.2px;letter-spacing:0.460px;font-family:'Liberation Mono',monospace;-webkit-text-stroke:0.25px #000">по ОКПО</div>
<div style="left:878px;top:326px;width:193px;height:39px;border:1px solid #000"></div>
<div style="left:878px;top:350px;width:193px;height:1px;background:#000"></div>
<div style="left:974px;top:326px;width:1px;height:39px;background:#000"></div>
<div class="t" style="left:913.59px;top:323.86px;line-height:20px;font-size:10.3px;letter-spacing:1.020px;font-family:'Liberation Mono',monospace;-webkit-text-stroke:0.2px #000">Номер</div>
<div class="t" style="left:900.59px;top:334.76px;line-height:20px;font-size:10.3px;letter-spacing:1.120px;font-family:'Liberation Mono',monospace;-webkit-text-stroke:0.2px #000">документа</div>
<div class="t" style="left:1009.49px;top:323.86px;line-height:20px;font-size:10.3px;letter-spacing:1.020px;font-family:'Liberation Mono',monospace;-webkit-text-stroke:0.2px #000">Дата</div>
<div class="t" style="left:984.99px;top:334.76px;line-height:20px;font-size:10.3px;letter-spacing:1.060px;font-family:'Liberation Mono',monospace;-webkit-text-stroke:0.2px #000">составления</div>
<div class="t" style="left:986.59px;top:349.16px;line-height:20px;font-size:10.3px;letter-spacing:0.570px;font-family:'Liberation Mono',monospace;-webkit-text-stroke:0.2px #000">14.12.2017</div>
<div style="left:1082px;top:326px;width:193px;height:39px;border:1px solid #000"></div>
<div style="left:1082px;top:339px;width:193px;height:1px;background:#000"></div>
<div style="left:1082px;top:350px;width:193px;height:1px;background:#000"></div>
<div style="left:1178px;top:339px;width:1px;height:26px;background:#000"></div>
<div class="t" style="left:1127.06px;top:322.82px;line-height:20px;font-size:11px;letter-spacing:0.590px;font-family:'Liberation Mono',monospace;-webkit-text-stroke:0.2px #000">Отчетный период</div>
<div class="t" style="left:1130.23px;top:335.97px;line-height:20px;font-size:11px;letter-spacing:0.590px;font-family:'Liberation Mono',monospace;-webkit-text-stroke:0.2px #000">с</div>
<div class="t" style="left:1219.76px;top:335.97px;line-height:20px;font-size:11px;letter-spacing:0.590px;font-family:'Liberation Mono',monospace;-webkit-text-stroke:0.2px #000">по</div>
<div class="t" style="left:1096.34px;top:349.16px;line-height:20px;font-size:10.3px;letter-spacing:0.570px;font-family:'Liberation Mono',monospace;-webkit-text-stroke:0.2px #000">01.11.2017</div>
<div class="t" style="left:1191.09px;top:349.16px;line-height:20px;font-size:10.3px;letter-spacing:0.570px;font-family:'Liberation Mono',monospace;-webkit-text-stroke:0.2px #000">30.11.2017</div>
<div class="t" style="left:798.61px;top:349.51px;line-height:20px;font-size:15.9px;letter-spacing:1.760px;font-family:'Liberation Mono',monospace;font-weight:bold;">ТАБЕЛЬ</div>
<div class="t" style="left:710.34px;top:371.35px;line-height:20px;font-size:16.5px;letter-spacing:1.290px;font-family:'Liberation Mono',monospace;font-weight:bold;">учета рабочего времени</div>
<div style="left:331px;top:403px;width:1052px;height:230px;border:2px solid #000"></div>
<div style="left:353px;top:403px;width:1px;height:230px;background:#000"></div>
<div style="left:458px;top:403px;width:1px;height:230px;background:#000"></div>
<div style="left:506px;top:403px;width:1px;height:230px;background:#000"></div>
<div style="left:866px;top:403px;width:1px;height:230px;background:#000"></div>
<div style="left:949px;top:403px;width:1px;height:230px;background:#000"></div>
<div style="left:1238px;top:403px;width:1px;height:230px;background:#000"></div>
<div style="left:530px;top:427px;width:1px;height:115px;background:#000"></div>
<div style="left:530px;top:558px;width:1px;height:75px;background:#000"></div>
<div style="left:554px;top:427px;width:1px;height:115px;background:#000"></div>
<div style="left:554px;top:558px;width:1px;height:75px;background:#000"></div>
<div style="left:578px;top:427px;width:1px;height:115px;background:#000"></div>
<div style="left:578px;top:558px;width:1px;height:75px;background:#000"></div>
<div style="left:602px;top:427px;width:1px;height:115px;background:#000"></div>
<div style="left:602px;top:558px;width:1px;height:75px;background:#000"></div>
<div style="left:626px;top:427px;width:1px;height:115px;background:#000"></div>
<div style="left:626px;top:558px;width:1px;height:75px;background:#000"></div>
<div style="left:650px;top:427px;width:1px;height:115px;background:#000"></div>
<div style="left:650px;top:558px;width:1px;height:75px;background:#000"></div>
<div style="left:674px;top:427px;width:1px;height:115px;background:#000"></div>
<div style="left:674px;top:558px;width:1px;height:75px;background:#000"></div>
<div style="left:698px;top:427px;width:1px;height:115px;background:#000"></div>
<div style="left:698px;top:558px;width:1px;height:75px;background:#000"></div>
<div style="left:722px;top:427px;width:1px;height:115px;background:#000"></div>
<div style="left:722px;top:558px;width:1px;height:75px;background:#000"></div>
<div style="left:746px;top:427px;width:1px;height:115px;background:#000"></div>
<div style="left:746px;top:558px;width:1px;height:75px;background:#000"></div>
<div style="left:770px;top:427px;width:1px;height:115px;background:#000"></div>
<div style="left:770px;top:558px;width:1px;height:75px;background:#000"></div>
<div style="left:794px;top:427px;width:1px;height:115px;background:#000"></div>
<div style="left:794px;top:558px;width:1px;height:75px;background:#000"></div>
<div style="left:818px;top:427px;width:1px;height:115px;background:#000"></div>
<div style="left:818px;top:558px;width:1px;height:75px;background:#000"></div>
<div style="left:842px;top:427px;width:1px;height:115px;background:#000"></div>
<div style="left:842px;top:558px;width:1px;height:75px;background:#000"></div>
<div style="left:902px;top:427px;width:1px;height:58px;background:#000"></div>
<div style="left:902px;top:542px;width:1px;height:91px;background:#000"></div>
<div style="left:981px;top:485px;width:1px;height:148px;background:#000"></div>
<div style="left:1045px;top:485px;width:1px;height:148px;background:#000"></div>
<div style="left:1100px;top:485px;width:1px;height:148px;background:#000"></div>
<div style="left:1132px;top:485px;width:1px;height:148px;background:#000"></div>
<div style="left:1184px;top:485px;width:1px;height:148px;background:#000"></div>
<div style="left:1274px;top:427px;width:1px;height:206px;background:#000"></div>
<div style="left:1310px;top:427px;width:1px;height:206px;background:#000"></div>
<div style="left:1346px;top:427px;width:1px;height:206px;background:#000"></div>
<div style="left:506px;top:427px;width:877px;height:1px;background:#000"></div>
<div style="left:949px;top:442px;width:289px;height:1px;background:#000"></div>
<div style="left:949px;top:456px;width:289px;height:1px;background:#000"></div>
<div style="left:949px;top:470px;width:289px;height:1px;background:#000"></div>
<div style="left:506px;top:484px;width:732px;height:1px;background:#000"></div>
<div style="left:866px;top:512px;width:83px;height:1px;background:#000"></div>
<div style="left:331px;top:542px;width:1052px;height:2px;background:#000"></div>
<div style="left:331px;top:558px;width:1052px;height:2px;background:#000"></div>
<div style="left:506px;top:578px;width:396px;height:1px;background:#000"></div>
<div style="left:949px;top:578px;width:434px;height:1px;background:#000"></div>
<div style="left:506px;top:614px;width:396px;height:1px;background:#000"></div>
<div style="left:949px;top:614px;width:434px;height:1px;background:#000"></div>
<div style="left:506px;top:596px;width:877px;height:1px;background:#000"></div>
<div class="t" style="left:193px;top:468.1px;width:300px;text-align:center;line-height:13.799999999999999px;font-size:12px;font-family:'Liberation Sans',sans-serif;transform:rotate(-90deg);color:#333;">Номер по порядку</div>
<div class="t" style="left:381.46px;top:436.47px;line-height:20px;font-size:9.5px;letter-spacing:0.600px;font-family:'Liberation Mono',monospace;font-weight:bold;">Фамилия,</div>
<div class="t" style="left:378.31px;top:450.47px;line-height:20px;font-size:9.5px;letter-spacing:0.600px;font-family:'Liberation Mono',monospace;font-weight:bold;">инициалы,</div>
<div class="t" style="left:378.31px;top:464.47px;line-height:20px;font-size:9.5px;letter-spacing:0.600px;font-family:'Liberation Mono',monospace;font-weight:bold;">должность</div>
<div class="t" style="left:359.41px;top:478.47px;line-height:20px;font-size:9.5px;letter-spacing:0.600px;font-family:'Liberation Mono',monospace;font-weight:bold;">(специальность,</div>
<div class="t" style="left:375.16px;top:492.47px;line-height:20px;font-size:9.5px;letter-spacing:0.600px;font-family:'Liberation Mono',monospace;font-weight:bold;">профессия)</div>
<div class="t" style="left:460.51px;top:450.97px;line-height:20px;font-size:9.5px;letter-spacing:0.800px;font-family:'Liberation Mono',monospace;font-weight:bold;">Табель-</div>
<div class="t" style="left:473.51px;top:464.67px;line-height:20px;font-size:9.5px;letter-spacing:0.800px;font-family:'Liberation Mono',monospace;font-weight:bold;">ный</div>
<div class="t" style="left:467.01px;top:478.37px;line-height:20px;font-size:9.5px;letter-spacing:0.800px;font-family:'Liberation Mono',monospace;font-weight:bold;">номер</div>
<div class="t" style="left:573.12px;top:401.37px;line-height:20px;font-size:9.5px;letter-spacing:0.770px;font-family:'Liberation Mono',monospace;font-weight:bold;">Отметки о явках и неявках на работу</div>
<div class="t" style="left:643.62px;top:412.22px;line-height:20px;font-size:9.5px;letter-spacing:0.770px;font-family:'Liberation Mono',monospace;font-weight:bold;">по числам месяца</div>
<div class="t" style="left:318.5px;top:455.5px;width:400px;text-align:center;line-height:11px;font-size:11px;font-family:'Liberation Sans',sans-serif;">1</div>
<div class="t" style="left:318.5px;top:509.5px;width:400px;text-align:center;line-height:11px;font-size:11px;font-family:'Liberation Sans',sans-serif;">16</div>
<div class="t" style="left:342.5px;top:455.5px;width:400px;text-align:center;line-height:11px;font-size:11px;font-family:'Liberation Sans',sans-serif;">2</div>
<div class="t" style="left:342.5px;top:509.5px;width:400px;text-align:center;line-height:11px;font-size:11px;font-family:'Liberation Sans',sans-serif;">17</div>
<div class="t" style="left:366.5px;top:455.5px;width:400px;text-align:center;line-height:11px;font-size:11px;font-family:'Liberation Sans',sans-serif;">3</div>
<div class="t" style="left:366.5px;top:509.5px;width:400px;text-align:center;line-height:11px;font-size:11px;font-family:'Liberation Sans',sans-serif;">18</div>
<div class="t" style="left:390.5px;top:455.5px;width:400px;text-align:center;line-height:11px;font-size:11px;font-family:'Liberation Sans',sans-serif;">4</div>
<div class="t" style="left:390.5px;top:509.5px;width:400px;text-align:center;line-height:11px;font-size:11px;font-family:'Liberation Sans',sans-serif;">19</div>
<div class="t" style="left:414.5px;top:455.5px;width:400px;text-align:center;line-height:11px;font-size:11px;font-family:'Liberation Sans',sans-serif;">5</div>
<div class="t" style="left:414.5px;top:509.5px;width:400px;text-align:center;line-height:11px;font-size:11px;font-family:'Liberation Sans',sans-serif;">20</div>
<div class="t" style="left:438.5px;top:455.5px;width:400px;text-align:center;line-height:11px;font-size:11px;font-family:'Liberation Sans',sans-serif;">6</div>
<div class="t" style="left:438.5px;top:509.5px;width:400px;text-align:center;line-height:11px;font-size:11px;font-family:'Liberation Sans',sans-serif;">21</div>
<div class="t" style="left:462.5px;top:455.5px;width:400px;text-align:center;line-height:11px;font-size:11px;font-family:'Liberation Sans',sans-serif;">7</div>
<div class="t" style="left:462.5px;top:509.5px;width:400px;text-align:center;line-height:11px;font-size:11px;font-family:'Liberation Sans',sans-serif;">22</div>
<div class="t" style="left:486.5px;top:455.5px;width:400px;text-align:center;line-height:11px;font-size:11px;font-family:'Liberation Sans',sans-serif;">8</div>
<div class="t" style="left:486.5px;top:509.5px;width:400px;text-align:center;line-height:11px;font-size:11px;font-family:'Liberation Sans',sans-serif;">23</div>
<div class="t" style="left:510.5px;top:455.5px;width:400px;text-align:center;line-height:11px;font-size:11px;font-family:'Liberation Sans',sans-serif;">9</div>
<div class="t" style="left:510.5px;top:509.5px;width:400px;text-align:center;line-height:11px;font-size:11px;font-family:'Liberation Sans',sans-serif;">24</div>
<div class="t" style="left:534.5px;top:455.5px;width:400px;text-align:center;line-height:11px;font-size:11px;font-family:'Liberation Sans',sans-serif;">10</div>
<div class="t" style="left:534.5px;top:509.5px;width:400px;text-align:center;line-height:11px;font-size:11px;font-family:'Liberation Sans',sans-serif;">25</div>
<div class="t" style="left:558.5px;top:455.5px;width:400px;text-align:center;line-height:11px;font-size:11px;font-family:'Liberation Sans',sans-serif;">11</div>
<div class="t" style="left:558.5px;top:509.5px;width:400px;text-align:center;line-height:11px;font-size:11px;font-family:'Liberation Sans',sans-serif;">26</div>
<div class="t" style="left:582.5px;top:455.5px;width:400px;text-align:center;line-height:11px;font-size:11px;font-family:'Liberation Sans',sans-serif;">12</div>
<div class="t" style="left:582.5px;top:509.5px;width:400px;text-align:center;line-height:11px;font-size:11px;font-family:'Liberation Sans',sans-serif;">27</div>
<div class="t" style="left:606.5px;top:455.5px;width:400px;text-align:center;line-height:11px;font-size:11px;font-family:'Liberation Sans',sans-serif;">13</div>
<div class="t" style="left:606.5px;top:509.5px;width:400px;text-align:center;line-height:11px;font-size:11px;font-family:'Liberation Sans',sans-serif;">28</div>
<div class="t" style="left:630.5px;top:455.5px;width:400px;text-align:center;line-height:11px;font-size:11px;font-family:'Liberation Sans',sans-serif;">14</div>
<div class="t" style="left:630.5px;top:509.5px;width:400px;text-align:center;line-height:11px;font-size:11px;font-family:'Liberation Sans',sans-serif;">29</div>
<div class="t" style="left:654.5px;top:455.5px;width:400px;text-align:center;line-height:11px;font-size:11px;font-family:'Liberation Sans',sans-serif;">15</div>
<div class="t" style="left:654.5px;top:509.5px;width:400px;text-align:center;line-height:11px;font-size:11px;font-family:'Liberation Sans',sans-serif;">30</div>
<div class="t" style="left:888.26px;top:399.96px;line-height:20px;font-size:8.4px;letter-spacing:0.730px;font-family:'Liberation Mono',monospace;font-weight:bold;">Отрабо-</div>
<div class="t" style="left:888.86px;top:411.96px;line-height:20px;font-size:8.4px;letter-spacing:0.730px;font-family:'Liberation Mono',monospace;font-weight:bold;">тано за</div>
<div class="t" style="left:995.46px;top:399.96px;line-height:20px;font-size:8.4px;letter-spacing:0.610px;font-family:'Liberation Mono',monospace;font-weight:bold;">Данные для начисления заработной</div>
<div class="t" style="left:984.66px;top:411.96px;line-height:20px;font-size:8.4px;letter-spacing:0.610px;font-family:'Liberation Mono',monospace;font-weight:bold;">платы по видам и направлениям затрат</div>
<div class="t" style="left:1246.59px;top:405.26px;line-height:20px;font-size:10.3px;letter-spacing:0.320px;font-family:'Liberation Mono',monospace;-webkit-text-stroke:0.3px #000">Неявки по причинам</div>
<div class="t" style="left:1061.96px;top:425.66px;line-height:20px;font-size:8.4px;letter-spacing:0.610px;font-family:'Liberation Mono',monospace;font-weight:bold;">код вида оплаты</div>
<div class="t" style="left:1046.16px;top:453.56px;line-height:20px;font-size:8.4px;letter-spacing:0.610px;font-family:'Liberation Mono',monospace;font-weight:bold;">корреспондирующий счет</div>
<div class="t" style="left:735px;top:446px;width:300px;text-align:center;line-height:10px;font-size:8.5px;font-family:'Liberation Sans',sans-serif;transform:rotate(-90deg)">половину
месяца (I, II)</div>
<div class="t" style="left:776px;top:447.525px;width:300px;text-align:center;line-height:14.95px;font-size:13px;font-family:'Liberation Sans',sans-serif;transform:rotate(-90deg);color:#333;">месяц</div>
<div class="t" style="left:898.56px;top:489.97px;line-height:20px;font-size:9.5px;letter-spacing:0.750px;font-family:'Liberation Mono',monospace;font-weight:bold;">Дни</div>
<div class="t" style="left:895.33px;top:518.47px;line-height:20px;font-size:9.5px;letter-spacing:0.750px;font-family:'Liberation Mono',monospace;font-weight:bold;">Часы</div>
<div class="t" style="left:957.66px;top:487.86px;line-height:20px;font-size:8.4px;letter-spacing:0.610px;font-family:'Liberation Mono',monospace;font-weight:bold;">код</div>
<div class="t" style="left:954.66px;top:499.86px;line-height:20px;font-size:8.4px;letter-spacing:0.610px;font-family:'Liberation Mono',monospace;font-weight:bold;">вида</div>
<div class="t" style="left:949.26px;top:512.06px;line-height:20px;font-size:8.4px;letter-spacing:0.610px;font-family:'Liberation Mono',monospace;font-weight:bold;">оплаты</div>
<div class="t" style="left:985.36px;top:487.86px;line-height:20px;font-size:8.4px;letter-spacing:0.610px;font-family:'Liberation Mono',monospace;font-weight:bold;">корреспон-</div>
<div class="t" style="left:991.56px;top:499.86px;line-height:20px;font-size:8.4px;letter-spacing:0.610px;font-family:'Liberation Mono',monospace;font-weight:bold;">дирующий</div>
<div class="t" style="left:1003.06px;top:512.06px;line-height:20px;font-size:8.4px;letter-spacing:0.610px;font-family:'Liberation Mono',monospace;font-weight:bold;">счет</div>
<div class="t" style="left:1064.56px;top:487.86px;line-height:20px;font-size:8.4px;letter-spacing:0.610px;font-family:'Liberation Mono',monospace;font-weight:bold;">дни</div>
<div class="t" style="left:1057.66px;top:499.86px;line-height:20px;font-size:8.4px;letter-spacing:0.610px;font-family:'Liberation Mono',monospace;font-weight:bold;">(часы)</div>
<div class="t" style="left:1108.26px;top:487.86px;line-height:20px;font-size:8.4px;letter-spacing:0.610px;font-family:'Liberation Mono',monospace;font-weight:bold;">код</div>
<div class="t" style="left:1105.26px;top:499.86px;line-height:20px;font-size:8.4px;letter-spacing:0.610px;font-family:'Liberation Mono',monospace;font-weight:bold;">вида</div>
<div class="t" style="left:1100.16px;top:512.06px;line-height:20px;font-size:8.4px;letter-spacing:0.610px;font-family:'Liberation Mono',monospace;font-weight:bold;">оплаты</div>
<div class="t" style="left:1131.36px;top:487.86px;line-height:20px;font-size:8.4px;letter-spacing:0.610px;font-family:'Liberation Mono',monospace;font-weight:bold;">корреспон-</div>
<div class="t" style="left:1136.66px;top:499.86px;line-height:20px;font-size:8.4px;letter-spacing:0.610px;font-family:'Liberation Mono',monospace;font-weight:bold;">дирующий</div>
<div class="t" style="left:1148.26px;top:512.06px;line-height:20px;font-size:8.4px;letter-spacing:0.610px;font-family:'Liberation Mono',monospace;font-weight:bold;">счет</div>
<div class="t" style="left:1203.56px;top:487.86px;line-height:20px;font-size:8.4px;letter-spacing:0.610px;font-family:'Liberation Mono',monospace;font-weight:bold;">дни</div>
<div class="t" style="left:1195.86px;top:499.86px;line-height:20px;font-size:8.4px;letter-spacing:0.610px;font-family:'Liberation Mono',monospace;font-weight:bold;">(часы)</div>
<div class="t" style="left:1246.56px;top:475.47px;line-height:20px;font-size:9.5px;letter-spacing:0.750px;font-family:'Liberation Mono',monospace;font-weight:bold;">код</div>
<div class="t" style="left:1318.56px;top:475.47px;line-height:20px;font-size:9.5px;letter-spacing:0.750px;font-family:'Liberation Mono',monospace;font-weight:bold;">код</div>
<div class="t" style="left:1142px;top:477.8125px;width:300px;text-align:center;line-height:14.374999999999998px;font-size:12.5px;font-family:'Liberation Sans',sans-serif;transform:rotate(-90deg);color:#333;">дни (часы)</div>
<div class="t" style="left:1214px;top:477.8125px;width:300px;text-align:center;line-height:14.374999999999998px;font-size:12.5px;font-family:'Liberation Sans',sans-serif;transform:rotate(-90deg);color:#333;">дни (часы)</div>
<div class="t" style="left:339.19px;top:542.40px;line-height:20px;font-size:10.5px;letter-spacing:-0.300px;font-family:'Liberation Mono',monospace;">1</div>
<div class="t" style="left:402.19px;top:542.40px;line-height:20px;font-size:10.5px;letter-spacing:-0.300px;font-family:'Liberation Mono',monospace;">2</div>
<div class="t" style="left:481.39px;top:542.40px;line-height:20px;font-size:10.5px;letter-spacing:-0.300px;font-family:'Liberation Mono',monospace;">3</div>
<div class="t" style="left:682.69px;top:542.40px;line-height:20px;font-size:10.5px;letter-spacing:-0.300px;font-family:'Liberation Mono',monospace;">4</div>
<div class="t" style="left:881.09px;top:542.40px;line-height:20px;font-size:10.5px;letter-spacing:-0.300px;font-family:'Liberation Mono',monospace;">5</div>
<div class="t" style="left:922.19px;top:542.40px;line-height:20px;font-size:10.5px;letter-spacing:-0.300px;font-family:'Liberation Mono',monospace;">6</div>
<div class="t" style="left:962.19px;top:542.40px;line-height:20px;font-size:10.5px;letter-spacing:-0.300px;font-family:'Liberation Mono',monospace;">7</div>
<div class="t" style="left:1010.19px;top:542.40px;line-height:20px;font-size:10.5px;letter-spacing:-0.300px;font-family:'Liberation Mono',monospace;">8</div>
<div class="t" style="left:1069.69px;top:542.40px;line-height:20px;font-size:10.5px;letter-spacing:-0.300px;font-family:'Liberation Mono',monospace;">9</div>
<div class="t" style="left:1109.99px;top:542.40px;line-height:20px;font-size:10.5px;letter-spacing:-0.300px;font-family:'Liberation Mono',monospace;">10</div>
<div class="t" style="left:1151.69px;top:542.40px;line-height:20px;font-size:10.5px;letter-spacing:-0.300px;font-family:'Liberation Mono',monospace;">11</div>
<div class="t" style="left:1204.69px;top:542.40px;line-height:20px;font-size:10.5px;letter-spacing:-0.300px;font-family:'Liberation Mono',monospace;">12</div>
<div class="t" style="left:1249.69px;top:542.40px;line-height:20px;font-size:10.5px;letter-spacing:-0.300px;font-family:'Liberation Mono',monospace;">13</div>
<div class="t" style="left:1285.69px;top:542.40px;line-height:20px;font-size:10.5px;letter-spacing:-0.300px;font-family:'Liberation Mono',monospace;">14</div>
<div class="t" style="left:1321.69px;top:542.40px;line-height:20px;font-size:10.5px;letter-spacing:-0.300px;font-family:'Liberation Mono',monospace;">15</div>
<div class="t" style="left:1357.69px;top:542.40px;line-height:20px;font-size:10.5px;letter-spacing:-0.300px;font-family:'Liberation Mono',monospace;">16</div>
<div class="t" style="left:339.19px;top:562.50px;line-height:20px;font-size:10.5px;letter-spacing:-0.300px;font-family:'Liberation Mono',monospace;-webkit-text-stroke:0.2px #000">1</div>
<div class="t" style="left:353.62px;top:562.77px;line-height:20px;font-size:9.5px;letter-spacing:0.800px;font-family:'Liberation Mono',monospace;font-weight:bold;">Петров Сергей</div>
<div class="t" style="left:353.62px;top:576.97px;line-height:20px;font-size:9.5px;letter-spacing:0.800px;font-family:'Liberation Mono',monospace;font-weight:bold;">Александрович,</div>
<div class="t" style="left:353.62px;top:591.17px;line-height:20px;font-size:9.5px;letter-spacing:0.800px;font-family:'Liberation Mono',monospace;font-weight:bold;">Электрик</div>
<div class="t" style="left:459.82px;top:562.77px;line-height:20px;font-size:9.5px;letter-spacing:0.800px;font-family:'Liberation Mono',monospace;font-weight:bold;">3</div>
<div class="t" style="left:318.0px;top:564.1px;width:400px;text-align:center;line-height:11.8px;font-size:11.8px;font-family:'Liberation Serif',serif;letter-spacing:-0.3px">В</div>
<div class="t" style="left:318.0px;top:600.4px;width:400px;text-align:center;line-height:11.8px;font-size:11.8px;font-family:'Liberation Serif',serif;letter-spacing:-0.3px">В</div>
<div class="t" style="left:342.0px;top:564.1px;width:400px;text-align:center;line-height:11.8px;font-size:11.8px;font-family:'Liberation Serif',serif;letter-spacing:-0.3px">В</div>
<div class="t" style="left:342.0px;top:600.4px;width:400px;text-align:center;line-height:11.8px;font-size:11.8px;font-family:'Liberation Serif',serif;letter-spacing:-0.3px">В</div>
<div class="t" style="left:366.0px;top:564.1px;width:400px;text-align:center;line-height:11.8px;font-size:11.8px;font-family:'Liberation Serif',serif;letter-spacing:-0.3px">В</div>
<div class="t" style="left:366.0px;top:600.4px;width:400px;text-align:center;line-height:11.8px;font-size:11.8px;font-family:'Liberation Serif',serif;letter-spacing:-0.3px">В</div>
<div class="t" style="left:390.0px;top:564.1px;width:400px;text-align:center;line-height:11.8px;font-size:11.8px;font-family:'Liberation Serif',serif;letter-spacing:-0.3px">Я/Н</div>
<div class="t" style="left:390.0px;top:600.4px;width:400px;text-align:center;line-height:11.8px;font-size:11.8px;font-family:'Liberation Serif',serif;letter-spacing:-0.3px">Я/Н</div>
<div class="t" style="left:390.5px;top:583.6px;width:400px;text-align:center;line-height:11.8px;font-size:11.8px;font-family:'Liberation Serif',serif;letter-spacing:-0.3px">8/4</div>
<div class="t" style="left:390.5px;top:619.6px;width:400px;text-align:center;line-height:11.8px;font-size:11.8px;font-family:'Liberation Serif',serif;letter-spacing:-0.3px">8/4</div>
<div class="t" style="left:414.0px;top:564.1px;width:400px;text-align:center;line-height:11.8px;font-size:11.8px;font-family:'Liberation Serif',serif;letter-spacing:-0.3px">Я/Н</div>
<div class="t" style="left:414.0px;top:600.4px;width:400px;text-align:center;line-height:11.8px;font-size:11.8px;font-family:'Liberation Serif',serif;letter-spacing:-0.3px">Я/Н</div>
<div class="t" style="left:414.5px;top:583.6px;width:400px;text-align:center;line-height:11.8px;font-size:11.8px;font-family:'Liberation Serif',serif;letter-spacing:-0.3px">8/4</div>
<div class="t" style="left:414.5px;top:619.6px;width:400px;text-align:center;line-height:11.8px;font-size:11.8px;font-family:'Liberation Serif',serif;letter-spacing:-0.3px">8/4</div>
<div class="t" style="left:438.0px;top:564.1px;width:400px;text-align:center;line-height:11.8px;font-size:11.8px;font-family:'Liberation Serif',serif;letter-spacing:-0.3px">В</div>
<div class="t" style="left:438.0px;top:600.4px;width:400px;text-align:center;line-height:11.8px;font-size:11.8px;font-family:'Liberation Serif',serif;letter-spacing:-0.3px">В</div>
<div class="t" style="left:462.0px;top:564.1px;width:400px;text-align:center;line-height:11.8px;font-size:11.8px;font-family:'Liberation Serif',serif;letter-spacing:-0.3px">В</div>
<div class="t" style="left:462.0px;top:600.4px;width:400px;text-align:center;line-height:11.8px;font-size:11.8px;font-family:'Liberation Serif',serif;letter-spacing:-0.3px">В</div>
<div class="t" style="left:486.0px;top:564.1px;width:400px;text-align:center;line-height:11.8px;font-size:11.8px;font-family:'Liberation Serif',serif;letter-spacing:-0.3px">В</div>
<div class="t" style="left:486.0px;top:600.4px;width:400px;text-align:center;line-height:11.8px;font-size:11.8px;font-family:'Liberation Serif',serif;letter-spacing:-0.3px">В</div>
<div class="t" style="left:510.0px;top:564.1px;width:400px;text-align:center;line-height:11.8px;font-size:11.8px;font-family:'Liberation Serif',serif;letter-spacing:-0.3px">Я/Н</div>
<div class="t" style="left:510.0px;top:600.4px;width:400px;text-align:center;line-height:11.8px;font-size:11.8px;font-family:'Liberation Serif',serif;letter-spacing:-0.3px">Я/Н</div>
<div class="t" style="left:510.5px;top:583.6px;width:400px;text-align:center;line-height:11.8px;font-size:11.8px;font-family:'Liberation Serif',serif;letter-spacing:-0.3px">8/4</div>
<div class="t" style="left:510.5px;top:619.6px;width:400px;text-align:center;line-height:11.8px;font-size:11.8px;font-family:'Liberation Serif',serif;letter-spacing:-0.3px">8/4</div>
<div class="t" style="left:534.0px;top:564.1px;width:400px;text-align:center;line-height:11.8px;font-size:11.8px;font-family:'Liberation Serif',serif;letter-spacing:-0.3px">Я/Н</div>
<div class="t" style="left:534.0px;top:600.4px;width:400px;text-align:center;line-height:11.8px;font-size:11.8px;font-family:'Liberation Serif',serif;letter-spacing:-0.3px">Я/Н</div>
<div class="t" style="left:534.5px;top:583.6px;width:400px;text-align:center;line-height:11.8px;font-size:11.8px;font-family:'Liberation Serif',serif;letter-spacing:-0.3px">8/4</div>
<div class="t" style="left:534.5px;top:619.6px;width:400px;text-align:center;line-height:11.8px;font-size:11.8px;font-family:'Liberation Serif',serif;letter-spacing:-0.3px">8/4</div>
<div class="t" style="left:558.0px;top:564.1px;width:400px;text-align:center;line-height:11.8px;font-size:11.8px;font-family:'Liberation Serif',serif;letter-spacing:-0.3px">В</div>
<div class="t" style="left:558.0px;top:600.4px;width:400px;text-align:center;line-height:11.8px;font-size:11.8px;font-family:'Liberation Serif',serif;letter-spacing:-0.3px">В</div>
<div class="t" style="left:582.0px;top:564.1px;width:400px;text-align:center;line-height:11.8px;font-size:11.8px;font-family:'Liberation Serif',serif;letter-spacing:-0.3px">В</div>
<div class="t" style="left:582.0px;top:600.4px;width:400px;text-align:center;line-height:11.8px;font-size:11.8px;font-family:'Liberation Serif',serif;letter-spacing:-0.3px">В</div>
<div class="t" style="left:606.0px;top:564.1px;width:400px;text-align:center;line-height:11.8px;font-size:11.8px;font-family:'Liberation Serif',serif;letter-spacing:-0.3px">В</div>
<div class="t" style="left:606.0px;top:600.4px;width:400px;text-align:center;line-height:11.8px;font-size:11.8px;font-family:'Liberation Serif',serif;letter-spacing:-0.3px">В</div>
<div class="t" style="left:630.0px;top:564.1px;width:400px;text-align:center;line-height:11.8px;font-size:11.8px;font-family:'Liberation Serif',serif;letter-spacing:-0.3px">Я/Н</div>
<div class="t" style="left:630.0px;top:600.4px;width:400px;text-align:center;line-height:11.8px;font-size:11.8px;font-family:'Liberation Serif',serif;letter-spacing:-0.3px">Я/Н</div>
<div class="t" style="left:630.5px;top:583.6px;width:400px;text-align:center;line-height:11.8px;font-size:11.8px;font-family:'Liberation Serif',serif;letter-spacing:-0.3px">8/4</div>
<div class="t" style="left:630.5px;top:619.6px;width:400px;text-align:center;line-height:11.8px;font-size:11.8px;font-family:'Liberation Serif',serif;letter-spacing:-0.3px">8/4</div>
<div class="t" style="left:654.0px;top:564.1px;width:400px;text-align:center;line-height:11.8px;font-size:11.8px;font-family:'Liberation Serif',serif;letter-spacing:-0.3px">Я/Н</div>
<div class="t" style="left:654.0px;top:600.4px;width:400px;text-align:center;line-height:11.8px;font-size:11.8px;font-family:'Liberation Serif',serif;letter-spacing:-0.3px">Я/Н</div>
<div class="t" style="left:654.5px;top:583.6px;width:400px;text-align:center;line-height:11.8px;font-size:11.8px;font-family:'Liberation Serif',serif;letter-spacing:-0.3px">8/4</div>
<div class="t" style="left:654.5px;top:619.6px;width:400px;text-align:center;line-height:11.8px;font-size:11.8px;font-family:'Liberation Serif',serif;letter-spacing:-0.3px">8/4</div>
<div class="t" style="left:685.5px;top:563.4px;width:400px;text-align:center;line-height:12.2px;font-size:12.2px;font-family:'Liberation Serif',serif;letter-spacing:-0.3px">6</div>
<div class="t" style="left:685.5px;top:582.9px;width:400px;text-align:center;line-height:12.2px;font-size:12.2px;font-family:'Liberation Serif',serif;letter-spacing:-0.3px">48,00</div>
<div class="t" style="left:685.5px;top:600.4px;width:400px;text-align:center;line-height:12.2px;font-size:12.2px;font-family:'Liberation Serif',serif;letter-spacing:-0.3px">6</div>
<div class="t" style="left:685.5px;top:619.4px;width:400px;text-align:center;line-height:12.2px;font-size:12.2px;font-family:'Liberation Serif',serif;letter-spacing:-0.3px">48,00</div>
<div class="t" style="left:726px;top:572.9px;width:400px;text-align:center;line-height:12.2px;font-size:12.2px;font-family:'Liberation Serif',serif;">12</div>
<div class="t" style="left:725.5px;top:597.9px;width:400px;text-align:center;line-height:12.2px;font-size:12.2px;font-family:'Liberation Serif',serif;letter-spacing:-0.3px">96,00</div>
<div class="t" style="left:764.2px;top:563.4px;width:400px;text-align:center;line-height:12.2px;font-size:12.2px;font-family:'Liberation Serif',serif;letter-spacing:-0.3px">666</div>
<div class="t" style="left:810.2px;top:563.4px;width:400px;text-align:center;line-height:12.2px;font-size:12.2px;font-family:'Liberation Serif',serif;letter-spacing:-0.55px">46346346346</div>
<div class="t" style="left:870.5999999999999px;top:563.4px;width:400px;text-align:center;line-height:12.2px;font-size:12.2px;font-family:'Liberation Serif',serif;letter-spacing:-0.3px">12/96,00</div>
<div class="t" style="left:1056px;top:564.0px;width:400px;text-align:center;line-height:12px;font-size:12px;font-family:'Liberation Serif',serif;">В</div>
<div class="t" style="left:1092.5px;top:564.0px;width:400px;text-align:center;line-height:12px;font-size:12px;font-family:'Liberation Serif',serif;">18</div>
<div class="t" style="left:327.42px;top:637.22px;line-height:20px;font-size:9.5px;letter-spacing:0.770px;font-family:'Liberation Mono',monospace;font-weight:bold;">Ответственное лицо</div>
<div class="t" style="left:330.37px;top:651.37px;line-height:20px;font-size:9.5px;letter-spacing:0.770px;font-family:'Liberation Mono',monospace;font-weight:bold;">(табельщик)</div>
<div style="left:460px;top:662px;width:169px;height:1px;background:#000"></div>
<div style="left:634px;top:662px;width:85px;height:1px;background:#000"></div>
<div style="left:724px;top:662px;width:133px;height:1px;background:#000"></div>
<div class="t" style="left:518.55px;top:659.26px;line-height:20px;font-size:8.4px;letter-spacing:0.610px;font-family:'Liberation Mono',monospace;font-weight:bold;">должность</div>
<div class="t" style="left:659.60px;top:659.26px;line-height:20px;font-size:8.4px;letter-spacing:0.610px;font-family:'Liberation Mono',monospace;font-weight:bold;">подпись</div>
<div class="t" style="left:743.50px;top:659.26px;line-height:20px;font-size:8.4px;letter-spacing:0.610px;font-family:'Liberation Mono',monospace;font-weight:bold;">расшифровка подписи</div>
<div class="t" style="left:891.79px;top:647.68px;line-height:20px;font-size:10.2px;letter-spacing:0.300px;font-family:'Liberation Mono',monospace;font-weight:bold;">Руководитель</div>
<div class="t" style="left:851.89px;top:672.38px;line-height:20px;font-size:10.2px;letter-spacing:0.300px;font-family:'Liberation Mono',monospace;font-weight:bold;">инспектор по кадрам</div>
<div class="t" style="left:1083.59px;top:672.38px;line-height:20px;font-size:10.2px;letter-spacing:0.300px;font-family:'Liberation Mono',monospace;font-weight:bold;">Василенко И.А.</div>
<div style="left:982px;top:663px;width:85px;height:1px;background:#000"></div>
<div style="left:1072px;top:663px;width:133px;height:1px;background:#000"></div>
<div style="left:1221px;top:663px;width:25px;height:1px;background:#000"></div>
<div style="left:1253px;top:663px;width:71px;height:1px;background:#000"></div>
<div style="left:1342px;top:663px;width:18px;height:1px;background:#000"></div>
<div style="left:982px;top:691px;width:85px;height:1px;background:#000"></div>
<div style="left:1072px;top:691px;width:133px;height:1px;background:#000"></div>
<div style="left:1221px;top:691px;width:25px;height:1px;background:#000"></div>
<div style="left:1253px;top:691px;width:71px;height:1px;background:#000"></div>
<div style="left:1342px;top:691px;width:18px;height:1px;background:#000"></div>
<div class="t" style="left:1007.46px;top:659.76px;line-height:20px;font-size:8.4px;letter-spacing:0.610px;font-family:'Liberation Mono',monospace;font-weight:bold;">подпись</div>
<div class="t" style="left:1091.36px;top:659.76px;line-height:20px;font-size:8.4px;letter-spacing:0.610px;font-family:'Liberation Mono',monospace;font-weight:bold;">расшифровка подписи</div>
<div class="t" style="left:1007.46px;top:687.66px;line-height:20px;font-size:8.4px;letter-spacing:0.610px;font-family:'Liberation Mono',monospace;font-weight:bold;">подпись</div>
<div class="t" style="left:1091.36px;top:687.66px;line-height:20px;font-size:8.4px;letter-spacing:0.610px;font-family:'Liberation Mono',monospace;font-weight:bold;">расшифровка подписи</div>
<div class="t" style="left:1216px;top:651.25px;line-height:9.5px;font-size:9.5px;font-family:'Liberation Mono',monospace;font-weight:bold;">"</div>
<div class="t" style="left:1243px;top:651.25px;line-height:9.5px;font-size:9.5px;font-family:'Liberation Mono',monospace;font-weight:bold;">"</div>
<div class="t" style="left:1216px;top:679.25px;line-height:9.5px;font-size:9.5px;font-family:'Liberation Mono',monospace;font-weight:bold;">"</div>
<div class="t" style="left:1243px;top:679.25px;line-height:9.5px;font-size:9.5px;font-family:'Liberation Mono',monospace;font-weight:bold;">"</div>
<div class="t" style="left:1328px;top:651.5px;line-height:11px;font-size:11px;font-family:'Liberation Mono',monospace;font-family:'Liberation Sans',sans-serif;">20</div>
<div class="t" style="left:1360px;top:651.5px;line-height:11px;font-size:11px;font-family:'Liberation Mono',monospace;font-weight:bold;">г.</div>
<div class="t" style="left:1328px;top:679.5px;line-height:11px;font-size:11px;font-family:'Liberation Mono',monospace;font-family:'Liberation Sans',sans-serif;">20</div>
<div class="t" style="left:1360px;top:679.5px;line-height:11px;font-size:11px;font-family:'Liberation Mono',monospace;font-weight:bold;">г.</div>
</div></div>
<div style="left:1057px;top:146px;width:283px;height:66px;background:#acacac;border-top:1px solid #e8e8e8;border-left:1px solid #e8e8e8;border-right:1px solid #6a6a6a;border-bottom:1px solid #6a6a6a"></div>
<div style="left:1064px;top:153px;width:269px;height:23px;background:linear-gradient(#a6c0de,#c3d6ec)"></div>
<div style="left:1064px;top:176px;width:269px;height:30px;background:#f0f0f0"></div>
<div class="t" style="left:1068px;top:158px;color:#1a1a2a">Предварительный просмотр</div>
<div style="left:1311px;top:157px;width:18px;height:16px;background:#c75050"></div>
<svg style="position:absolute;left:1316px;top:161px" width="8" height="8"><path d="M1 1l6 6M7 1L1 7" stroke="#fff" stroke-width="1.6"/></svg>
<svg style="position:absolute;left:1064px;top:176px" width="269" height="30">
<g fill="#a0a0a0"><rect x="12" y="8" width="2" height="11"/><path d="M22 8v11l-6-5.5z"/><path d="M43 8v11l-6-5.5z"/><path d="M99 8v11l6-5.5z"/><path d="M120 8v11l6-5.5z"/><rect x="128" y="8" width="2" height="11"/></g>
<g stroke="#a0a0a0"><path d="M55.5 4v22M86.5 4v22M140.5 4v22M206.5 4v22M236.5 4v22"/></g>
<g stroke="#000" fill="#fff" stroke-width="1.2"><path d="M65.5 7.5h5v7h-5z"/><path d="M68.5 9.5h5v7h-5z"/><path d="M71.5 11.5h4l2 2v6h-6z"/></g>
<rect x="146.5" y="4.5" width="56" height="21" fill="#fff" stroke="#7a7a7a"/>
<rect x="183.5" y="6.5" width="16" height="17" fill="#dedede" stroke="#b0b0b0"/>
<path d="M187.5 13.5l4 4 4-4" stroke="#707070" stroke-width="1.2" fill="none"/>
<g transform="translate(200,0)"><path d="M13.6 6.6h6.8v9.6" fill="#fff" stroke="#000" stroke-width="1.3"/><path d="M13.6 6.6v9.8H9M20.4 16.4h4.4" stroke="#000" stroke-width="1.2" fill="none"/>
<path d="M13.4 7l4.6 3v11l-4.6-4z" fill="#a8a800" stroke="#000" stroke-width="1.1"/>
<path d="M22 11.5l3.6-3.4v6.8z M25 10h3v3h-3z" fill="#00009c"/></g>
</svg>
<svg style="position:absolute;left:1307px;top:182px" width="19" height="16" viewBox="0 0 19 16"><path d="M6.5 0.8h8.2l-1.2 6H4.8z" fill="#fff" stroke="#000" stroke-width="1.3"/><path d="M7.3 2.6h4.6M6.3 4.6h4.6" stroke="#000" stroke-width="1"/><path d="M2.5 6.2h12.5l2.6 1.8v5.4l-2.2 2.2H3.2L0.8 13.2V8z" fill="#000"/><path d="M3 7.6h11M2.2 10.6h12M3.2 13.8h11" stroke="#c0c0c0" stroke-width="1.1"/><path d="M9 10.6h4" stroke="#fff" stroke-width="1.1"/></svg>
<div class="t" style="left:1214px;top:183.5px;font-size:12.5px;letter-spacing:-0.5px">100%</div>
</body></html>
